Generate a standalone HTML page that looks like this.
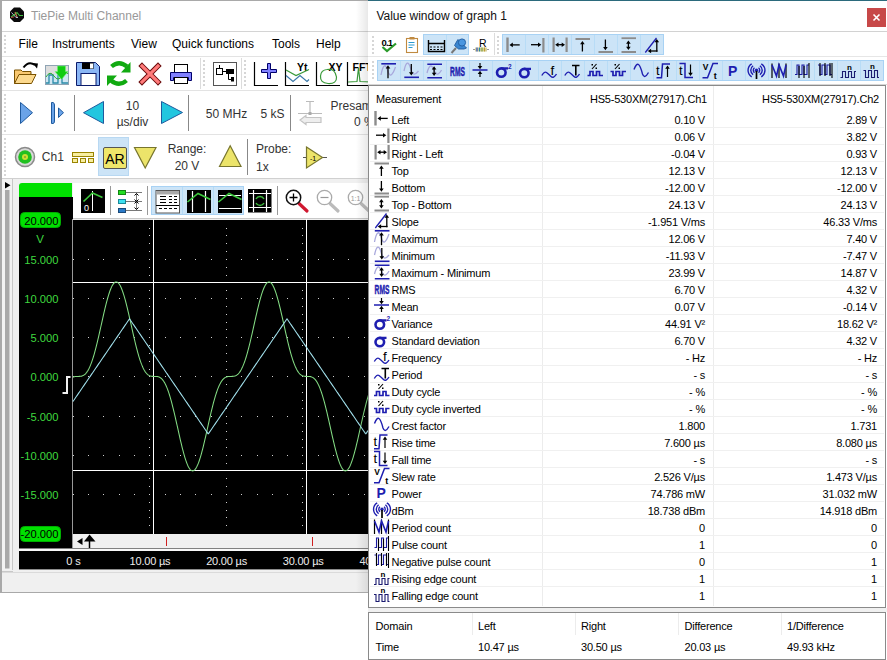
<!DOCTYPE html><html><head><meta charset="utf-8"><style>
*{box-sizing:border-box}
body{margin:0;width:887px;height:660px;position:relative;overflow:hidden;background:#fff;font-family:"Liberation Sans",sans-serif;color:#000}
.a{position:absolute}
.t{position:absolute;white-space:nowrap;line-height:1}
svg{position:absolute;overflow:visible}
</style></head><body>

<div class="a" style="left:0px;top:0px;width:400px;height:593px;background:#f0f0f0;border:1px solid #a9a9a9"></div>
<div class="a" style="left:1px;top:1px;width:399px;height:30px;background:#fff"></div>
<div class="a" style="left:1px;top:31px;width:399px;height:1px;background:#d4d4d4"></div>
<div class="a" style="left:1px;top:32px;width:399px;height:146px;background:#fff"></div>
<div class="a" style="left:1px;top:56px;width:399px;height:1px;background:#e3e3e3"></div>
<div class="a" style="left:1px;top:90px;width:399px;height:1px;background:#e3e3e3"></div>
<div class="a" style="left:1px;top:134px;width:399px;height:1px;background:#e3e3e3"></div>
<div class="a" style="left:1px;top:178px;width:399px;height:1px;background:#d0d0d0"></div>
<div class="a" style="left:4px;top:35px;width:2px;height:2px;background:#d6d6d6"></div><div class="a" style="left:4px;top:39px;width:2px;height:2px;background:#d6d6d6"></div><div class="a" style="left:4px;top:43px;width:2px;height:2px;background:#d6d6d6"></div><div class="a" style="left:4px;top:47px;width:2px;height:2px;background:#d6d6d6"></div><div class="a" style="left:4px;top:51px;width:2px;height:2px;background:#d6d6d6"></div>
<div class="a" style="left:4px;top:60px;width:2px;height:2px;background:#d6d6d6"></div><div class="a" style="left:4px;top:64px;width:2px;height:2px;background:#d6d6d6"></div><div class="a" style="left:4px;top:68px;width:2px;height:2px;background:#d6d6d6"></div><div class="a" style="left:4px;top:72px;width:2px;height:2px;background:#d6d6d6"></div><div class="a" style="left:4px;top:76px;width:2px;height:2px;background:#d6d6d6"></div><div class="a" style="left:4px;top:80px;width:2px;height:2px;background:#d6d6d6"></div><div class="a" style="left:4px;top:84px;width:2px;height:2px;background:#d6d6d6"></div>
<div class="a" style="left:4px;top:94px;width:2px;height:2px;background:#d6d6d6"></div><div class="a" style="left:4px;top:98px;width:2px;height:2px;background:#d6d6d6"></div><div class="a" style="left:4px;top:102px;width:2px;height:2px;background:#d6d6d6"></div><div class="a" style="left:4px;top:106px;width:2px;height:2px;background:#d6d6d6"></div><div class="a" style="left:4px;top:110px;width:2px;height:2px;background:#d6d6d6"></div><div class="a" style="left:4px;top:114px;width:2px;height:2px;background:#d6d6d6"></div><div class="a" style="left:4px;top:118px;width:2px;height:2px;background:#d6d6d6"></div><div class="a" style="left:4px;top:122px;width:2px;height:2px;background:#d6d6d6"></div><div class="a" style="left:4px;top:126px;width:2px;height:2px;background:#d6d6d6"></div><div class="a" style="left:4px;top:130px;width:2px;height:2px;background:#d6d6d6"></div>
<div class="a" style="left:4px;top:138px;width:2px;height:2px;background:#d6d6d6"></div><div class="a" style="left:4px;top:142px;width:2px;height:2px;background:#d6d6d6"></div><div class="a" style="left:4px;top:146px;width:2px;height:2px;background:#d6d6d6"></div><div class="a" style="left:4px;top:150px;width:2px;height:2px;background:#d6d6d6"></div><div class="a" style="left:4px;top:154px;width:2px;height:2px;background:#d6d6d6"></div><div class="a" style="left:4px;top:158px;width:2px;height:2px;background:#d6d6d6"></div><div class="a" style="left:4px;top:162px;width:2px;height:2px;background:#d6d6d6"></div><div class="a" style="left:4px;top:166px;width:2px;height:2px;background:#d6d6d6"></div><div class="a" style="left:4px;top:170px;width:2px;height:2px;background:#d6d6d6"></div><div class="a" style="left:4px;top:174px;width:2px;height:2px;background:#d6d6d6"></div>
<div class="a" style="left:203px;top:60px;width:2px;height:2px;background:#d6d6d6"></div><div class="a" style="left:203px;top:64px;width:2px;height:2px;background:#d6d6d6"></div><div class="a" style="left:203px;top:68px;width:2px;height:2px;background:#d6d6d6"></div><div class="a" style="left:203px;top:72px;width:2px;height:2px;background:#d6d6d6"></div><div class="a" style="left:203px;top:76px;width:2px;height:2px;background:#d6d6d6"></div><div class="a" style="left:203px;top:80px;width:2px;height:2px;background:#d6d6d6"></div><div class="a" style="left:203px;top:84px;width:2px;height:2px;background:#d6d6d6"></div>
<div class="a" style="left:244px;top:60px;width:2px;height:2px;background:#d6d6d6"></div><div class="a" style="left:244px;top:64px;width:2px;height:2px;background:#d6d6d6"></div><div class="a" style="left:244px;top:68px;width:2px;height:2px;background:#d6d6d6"></div><div class="a" style="left:244px;top:72px;width:2px;height:2px;background:#d6d6d6"></div><div class="a" style="left:244px;top:76px;width:2px;height:2px;background:#d6d6d6"></div><div class="a" style="left:244px;top:80px;width:2px;height:2px;background:#d6d6d6"></div><div class="a" style="left:244px;top:84px;width:2px;height:2px;background:#d6d6d6"></div>
<div class="t" style="left:31.00px;top:9.84px;font-size:12px;color:#999;">TiePie Multi Channel</div>
<div class="t" style="left:18.60px;top:38.34px;font-size:12px;color:#000;">File</div>
<div class="t" style="left:52.00px;top:38.34px;font-size:12px;color:#000;">Instruments</div>
<div class="t" style="left:131.00px;top:38.34px;font-size:12px;color:#000;">View</div>
<div class="t" style="left:172.00px;top:38.34px;font-size:12px;color:#000;">Quick functions</div>
<div class="t" style="left:272.00px;top:38.34px;font-size:12px;color:#000;">Tools</div>
<div class="t" style="left:316.00px;top:38.34px;font-size:12px;color:#000;">Help</div>
<svg class="a" style="left:0;top:0" width="400" height="180" viewBox="0 0 400 180"><polygon points="14,7.5 20,7.5 24,11.5 24,18 20,22 14,22 10,18 10,11.5" fill="#0a0a0a"/><path d="M11.5,12.5 L16,17.5 L18,17.5" stroke="#cce" stroke-width="0.9" fill="none"/><path d="M11,17 L14,15 L17,12.5 L19.5,15.5 L23,15.5" stroke="#40c040" stroke-width="1.1" fill="none"/><path d="M11,17.5 L14,17" stroke="#b04040" stroke-width="1" fill="none"/><path d="M15,12 L17,17" stroke="#c08050" stroke-width="1.2" fill="none"/><path d="M14.5,83.5 L14.5,70 L21,70 L22.5,71.5 L31,71.5 L31,74 Z" fill="#f9c870" stroke="#7a5200" stroke-width="1"/><path d="M14.5,83.5 L19,74.5 L36,74.5 L31.5,83.5 Z" fill="#fcd98e" stroke="#7a5200" stroke-width="1"/><path d="M23.5,67.5 Q28.5,60.5 35,65" stroke="#000" stroke-width="2" fill="none"/><polygon points="32.5,63 38,63.5 37,68.5" fill="#000"/><rect x="45.5" y="65.5" width="23" height="19" fill="#cfe6f2" stroke="#8fa4b4"/><rect x="46" y="66" width="22" height="8" fill="#ddd"/><path d="M46,83 L49,83 L49,75 L53,75 L53,83 L58,83 L58,75 L62,75 L62,83 L68,83" stroke="#2a8aa8" stroke-width="1.3" fill="none"/><path d="M46,77 Q50,70 54,76 T62,76 T68,74" stroke="#3a3" stroke-width="1" fill="none"/><polygon points="57.5,66 65.5,66 65.5,71.5 68,71.5 61.5,79.5 55,71.5 57.5,71.5" fill="#1c1" stroke="#7e7" stroke-width="0.6"/><path d="M76.5,62.5 L95.5,62.5 L99.5,66.5 L99.5,85.5 L76.5,85.5 Z" fill="#8ab6f5" stroke="#0b1b6b" stroke-width="1"/><rect x="82" y="62.5" width="11.5" height="6.5" fill="#000"/><rect x="90" y="63.5" width="3" height="5" fill="#fff"/><rect x="81" y="73.5" width="15" height="12" fill="#fff" stroke="#0b1b6b" stroke-width="1"/><path d="M111.5,66.5 Q119,60 127,66.5" stroke="#1a1" stroke-width="4.2" fill="none"/><polygon points="130.5,62 130.5,72.5 121,72.5" fill="#1a1"/><path d="M126.5,80.5 Q119,87 111,80.5" stroke="#1a1" stroke-width="4.2" fill="none"/><polygon points="107,75.5 117,75.5 107,86" fill="#1a1"/><path d="M142,66 L158,82 M158,66 L142,82" stroke="#6a0a0a" stroke-width="5.2" stroke-linecap="square" fill="none"/><path d="M142,66 L158,82 M158,66 L142,82" stroke="#ff7a7a" stroke-width="3.2" stroke-linecap="square" fill="none"/><rect x="174.5" y="64.5" width="13" height="8" fill="#fff" stroke="#000"/><path d="M170.5,72.5 L191.5,72.5 L191.5,80.5 L188.5,80.5 L188.5,77.5 L173.5,77.5 L173.5,80.5 L170.5,80.5 Z" fill="#8080ff" stroke="#00006b"/><rect x="174.5" y="77.5" width="13" height="6" fill="#fff" stroke="#000"/><line x1="200.5" y1="58" x2="200.5" y2="89" stroke="#dcdcdc"/><line x1="241.5" y1="58" x2="241.5" y2="89" stroke="#dcdcdc"/><rect x="213.5" y="62.5" width="23" height="23" fill="#fff" stroke="#555"/><rect x="216.5" y="68.5" width="6" height="6" fill="#fff" stroke="#000"/><line x1="219.5" y1="65" x2="219.5" y2="68.5" stroke="#000"/><line x1="222.5" y1="71.5" x2="226" y2="71.5" stroke="#000"/><rect x="226" y="69" width="8" height="5" fill="#000"/><path d="M228.5,74 L228.5,79.5 L231,79.5" stroke="#000" fill="none"/><rect x="231" y="77" width="3" height="4.5" fill="#000"/><path d="M254.5,62 L254.5,85.5 L278,85.5" stroke="#000" stroke-width="1.2" fill="none"/><path d="M267.5,63.5 L270.5,63.5 L270.5,69.5 L276.5,69.5 L276.5,72.5 L270.5,72.5 L270.5,78.5 L267.5,78.5 L267.5,72.5 L261.5,72.5 L261.5,69.5 L267.5,69.5 Z" fill="#8080ff" stroke="#00006b"/><path d="M285.5,62 L285.5,85.5 L309,85.5" stroke="#000" stroke-width="1.2" fill="none"/><text x="297" y="70.5" font-size="10.5" font-weight="bold" font-family="Liberation Sans">Yt</text><path d="M286,70 L296,75.5 L309,69.5" stroke="#3a9a3a" stroke-width="1.2" fill="none"/><path d="M286,75.5 L293,81.5 L300,75.5 L307,81.5 L309,79.5" stroke="#3a78a8" stroke-width="1.2" fill="none"/><path d="M316.5,62 L316.5,85.5 L340,85.5" stroke="#000" stroke-width="1.2" fill="none"/><text x="328.5" y="70.5" font-size="10.5" font-weight="bold" font-family="Liberation Sans">XY</text><path d="M327,69.5 Q335,68 336.5,77 Q337,84 328,83.5 Q320,83 320.5,76 Q321,70 327,69.5 Z" stroke="#3a9a3a" stroke-width="1.2" fill="none"/><path d="M347.5,62 L347.5,85.5 L371,85.5" stroke="#000" stroke-width="1.2" fill="none"/><text x="352.5" y="70.5" font-size="10.5" font-weight="bold" font-family="Liberation Sans">FFT</text><path d="M348,82 L357,81.5 L358.5,68 L360,81.5 L371,82" stroke="#3a9a3a" stroke-width="1.2" fill="none"/><polygon points="20.5,102.5 32.5,112.7 20.5,123.5" fill="#6aa3e8" stroke="#1f5a9e"/><path d="M51.5,102.5 L53,102.5 Q54.5,103 54.5,105 L54.5,121 Q54.5,123.5 53,123.5 L51.5,123.5 Z" fill="#6aa3e8" stroke="#1f5a9e"/><polygon points="58.5,108 63.5,112.7 58.5,117.5" fill="#6aa3e8" stroke="#1f5a9e"/><line x1="74.5" y1="95" x2="74.5" y2="131" stroke="#888"/><polygon points="83.5,112.7 103.5,101.5 103.5,123.5" fill="#22c6df" stroke="#1f5a9e"/><polygon points="161.5,101.5 182.5,112.5 161.5,123.5" fill="#22c6df" stroke="#1f5a9e"/><line x1="188.5" y1="95" x2="188.5" y2="131" stroke="#888"/><line x1="290.5" y1="95" x2="290.5" y2="131" stroke="#888"/><path d="M306,101.5 L314,101.5 M310,101.5 L310,113 M298,113.5 L322,113.5" stroke="#bbb" stroke-width="1.2" fill="none"/><rect x="308.5" y="112" width="3" height="3" fill="#aaa"/><path d="M321,117.5 L306,117.5 L306,115.5 L300,120 L306,124.5 L306,122.5 L321,122.5 Z" fill="#eee" stroke="#c4c4c4" stroke-width="1.2"/><circle cx="25" cy="157" r="9.5" fill="#d8d8d8" stroke="#8a8a8a" stroke-width="1.5"/><circle cx="25" cy="157" r="6.8" fill="#20c020"/><circle cx="25" cy="157" r="3" fill="#c8e030"/><circle cx="25" cy="157" r="0.8" fill="#663"/><rect x="72.5" y="152.5" width="21" height="4" fill="#f8eea0" stroke="#9a8400"/><rect x="72.5" y="158.5" width="5" height="4" fill="#f8eea0" stroke="#9a8400"/><rect x="80.5" y="158.5" width="5" height="4" fill="#f8eea0" stroke="#9a8400"/><rect x="88.5" y="158.5" width="5" height="4" fill="#f8eea0" stroke="#9a8400"/><rect x="98.5" y="137.5" width="30" height="38" fill="#cce4f7" stroke="#b8d8f2"/><rect x="103.5" y="147.5" width="23" height="21" rx="1.5" fill="#efe66a" stroke="#555"/><text x="115" y="164" font-size="14" text-anchor="middle" font-family="Liberation Sans">AR</text><polygon points="134.5,147.5 156,147.5 145.2,168" fill="#ece46a" stroke="#77752e" stroke-width="1.2"/><polygon points="219.5,166.5 241,166.5 230.2,145.8" fill="#ece46a" stroke="#77752e" stroke-width="1.2"/><line x1="247.5" y1="139" x2="247.5" y2="175" stroke="#888"/><path d="M303,157.5 L306,157.5 M322.5,157.5 L327,157.5" stroke="#555"/><polygon points="306.5,147 322.5,157.5 306.5,168" fill="#ece46a" stroke="#77752e" stroke-width="1.2"/><text x="313" y="160.5" font-size="7" text-anchor="middle" font-family="Liberation Sans">-1</text></svg>
<div class="t" style="left:32.50px;width:200px;text-align:center;top:99.84px;font-size:12px;color:#333;">10</div>
<div class="t" style="left:32.50px;width:200px;text-align:center;top:115.64px;font-size:12px;color:#333;">&micro;s/div</div>
<div class="t" style="left:205.80px;top:107.84px;font-size:12px;color:#333;">50 MHz</div>
<div class="t" style="left:260.60px;top:107.84px;font-size:12px;color:#333;">5 kS</div>
<div class="t" style="left:330.50px;top:99.84px;font-size:12px;color:#333;">Presamples</div>
<div class="t" style="left:354.00px;top:116.34px;font-size:12px;color:#333;">0 %</div>
<div class="t" style="left:41.80px;top:151.24px;font-size:12px;color:#333;">Ch1</div>
<div class="t" style="left:87.00px;width:200px;text-align:center;top:143.44px;font-size:12px;color:#333;">Range:</div>
<div class="t" style="left:87.00px;width:200px;text-align:center;top:160.34px;font-size:12px;color:#333;">20 V</div>
<div class="t" style="left:256.00px;top:143.44px;font-size:12px;color:#333;">Probe:</div>
<div class="t" style="left:256.00px;top:160.74px;font-size:12px;color:#333;">1x</div>
<svg class="a" style="left:0;top:0" width="403" height="600" viewBox="0 0 403 600"><rect x="1" y="179" width="11" height="392" fill="#f3f3f3"/><rect x="5" y="190" width="4.5" height="378.5" fill="#a9a9a9"/><polygon points="5,182 5,188.5 10.5,185.2" fill="#000"/><line x1="12.5" y1="179" x2="12.5" y2="570" stroke="#c8c8c8"/><rect x="13" y="179" width="6" height="392" fill="#f0f0f0"/><rect x="19" y="197" width="54" height="351" fill="#000"/><path d="M19,197 L19,186 Q19,183 22,183 L72,183 L72,197 Z" fill="#00e000"/><rect x="73" y="183" width="330" height="35" fill="#fff"/><rect x="73" y="218" width="330" height="1" fill="#a0a0a0"/><rect x="73" y="218" width="330" height="1" fill="#c8c8c8"/><rect x="73" y="219" width="330" height="1" fill="#eee"/><rect x="73" y="220" width="330" height="314" fill="#000"/><line x1="72.5" y1="219" x2="72.5" y2="548" stroke="#999"/><rect x="73" y="534" width="330" height="14" fill="#f0f0f0"/><rect x="19" y="548" width="384" height="1.3" fill="#808080"/><rect x="19" y="549" width="384" height="2" fill="#f8f8f8"/><rect x="19" y="551" width="384" height="18" fill="#000"/><rect x="19" y="569" width="384" height="1" fill="#8c8c8c"/><rect x="1" y="570" width="400" height="22" fill="#f0f0f0"/><rect x="1" y="572" width="400" height="1" fill="#dadada"/><rect x="1" y="571" width="12" height="1" fill="#c8c8c8"/><rect x="20.5" y="212.5" width="40" height="15" rx="4" fill="#00e000" stroke="#00b000"/><rect x="20.5" y="526.5" width="40" height="15" rx="4" fill="#00e000" stroke="#00b000"/><path d="M149,228h1v1h-1zM149,235h1v1h-1zM149,243h1v1h-1zM149,251h1v1h-1zM149,259h1v1h-1zM149,267h1v1h-1zM149,275h1v1h-1zM149,282h1v1h-1zM149,290h1v1h-1zM149,298h1v1h-1zM149,306h1v1h-1zM149,314h1v1h-1zM149,322h1v1h-1zM149,329h1v1h-1zM149,337h1v1h-1zM149,345h1v1h-1zM149,353h1v1h-1zM149,361h1v1h-1zM149,369h1v1h-1zM149,376h1v1h-1zM149,384h1v1h-1zM149,392h1v1h-1zM149,400h1v1h-1zM149,408h1v1h-1zM149,416h1v1h-1zM149,423h1v1h-1zM149,431h1v1h-1zM149,439h1v1h-1zM149,447h1v1h-1zM149,455h1v1h-1zM149,463h1v1h-1zM149,470h1v1h-1zM149,478h1v1h-1zM149,486h1v1h-1zM149,494h1v1h-1zM149,502h1v1h-1zM149,510h1v1h-1zM149,517h1v1h-1zM149,525h1v1h-1zM226,228h1v1h-1zM226,235h1v1h-1zM226,243h1v1h-1zM226,251h1v1h-1zM226,259h1v1h-1zM226,267h1v1h-1zM226,275h1v1h-1zM226,282h1v1h-1zM226,290h1v1h-1zM226,298h1v1h-1zM226,306h1v1h-1zM226,314h1v1h-1zM226,322h1v1h-1zM226,329h1v1h-1zM226,337h1v1h-1zM226,345h1v1h-1zM226,353h1v1h-1zM226,361h1v1h-1zM226,369h1v1h-1zM226,376h1v1h-1zM226,384h1v1h-1zM226,392h1v1h-1zM226,400h1v1h-1zM226,408h1v1h-1zM226,416h1v1h-1zM226,423h1v1h-1zM226,431h1v1h-1zM226,439h1v1h-1zM226,447h1v1h-1zM226,455h1v1h-1zM226,463h1v1h-1zM226,470h1v1h-1zM226,478h1v1h-1zM226,486h1v1h-1zM226,494h1v1h-1zM226,502h1v1h-1zM226,510h1v1h-1zM226,517h1v1h-1zM226,525h1v1h-1zM302,228h1v1h-1zM302,235h1v1h-1zM302,243h1v1h-1zM302,251h1v1h-1zM302,259h1v1h-1zM302,267h1v1h-1zM302,275h1v1h-1zM302,282h1v1h-1zM302,290h1v1h-1zM302,298h1v1h-1zM302,306h1v1h-1zM302,314h1v1h-1zM302,322h1v1h-1zM302,329h1v1h-1zM302,337h1v1h-1zM302,345h1v1h-1zM302,353h1v1h-1zM302,361h1v1h-1zM302,369h1v1h-1zM302,376h1v1h-1zM302,384h1v1h-1zM302,392h1v1h-1zM302,400h1v1h-1zM302,408h1v1h-1zM302,416h1v1h-1zM302,423h1v1h-1zM302,431h1v1h-1zM302,439h1v1h-1zM302,447h1v1h-1zM302,455h1v1h-1zM302,463h1v1h-1zM302,470h1v1h-1zM302,478h1v1h-1zM302,486h1v1h-1zM302,494h1v1h-1zM302,502h1v1h-1zM302,510h1v1h-1zM302,517h1v1h-1zM302,525h1v1h-1zM379,228h1v1h-1zM379,235h1v1h-1zM379,243h1v1h-1zM379,251h1v1h-1zM379,259h1v1h-1zM379,267h1v1h-1zM379,275h1v1h-1zM379,282h1v1h-1zM379,290h1v1h-1zM379,298h1v1h-1zM379,306h1v1h-1zM379,314h1v1h-1zM379,322h1v1h-1zM379,329h1v1h-1zM379,337h1v1h-1zM379,345h1v1h-1zM379,353h1v1h-1zM379,361h1v1h-1zM379,369h1v1h-1zM379,376h1v1h-1zM379,384h1v1h-1zM379,392h1v1h-1zM379,400h1v1h-1zM379,408h1v1h-1zM379,416h1v1h-1zM379,423h1v1h-1zM379,431h1v1h-1zM379,439h1v1h-1zM379,447h1v1h-1zM379,455h1v1h-1zM379,463h1v1h-1zM379,470h1v1h-1zM379,478h1v1h-1zM379,486h1v1h-1zM379,494h1v1h-1zM379,502h1v1h-1zM379,510h1v1h-1zM379,517h1v1h-1zM379,525h1v1h-1zM73,259h1v1h-1zM88,259h1v1h-1zM103,259h1v1h-1zM119,259h1v1h-1zM134,259h1v1h-1zM149,259h1v1h-1zM165,259h1v1h-1zM180,259h1v1h-1zM195,259h1v1h-1zM211,259h1v1h-1zM226,259h1v1h-1zM241,259h1v1h-1zM257,259h1v1h-1zM272,259h1v1h-1zM287,259h1v1h-1zM302,259h1v1h-1zM318,259h1v1h-1zM333,259h1v1h-1zM348,259h1v1h-1zM364,259h1v1h-1zM379,259h1v1h-1zM394,259h1v1h-1zM73,298h1v1h-1zM88,298h1v1h-1zM103,298h1v1h-1zM119,298h1v1h-1zM134,298h1v1h-1zM149,298h1v1h-1zM165,298h1v1h-1zM180,298h1v1h-1zM195,298h1v1h-1zM211,298h1v1h-1zM226,298h1v1h-1zM241,298h1v1h-1zM257,298h1v1h-1zM272,298h1v1h-1zM287,298h1v1h-1zM302,298h1v1h-1zM318,298h1v1h-1zM333,298h1v1h-1zM348,298h1v1h-1zM364,298h1v1h-1zM379,298h1v1h-1zM394,298h1v1h-1zM73,337h1v1h-1zM88,337h1v1h-1zM103,337h1v1h-1zM119,337h1v1h-1zM134,337h1v1h-1zM149,337h1v1h-1zM165,337h1v1h-1zM180,337h1v1h-1zM195,337h1v1h-1zM211,337h1v1h-1zM226,337h1v1h-1zM241,337h1v1h-1zM257,337h1v1h-1zM272,337h1v1h-1zM287,337h1v1h-1zM302,337h1v1h-1zM318,337h1v1h-1zM333,337h1v1h-1zM348,337h1v1h-1zM364,337h1v1h-1zM379,337h1v1h-1zM394,337h1v1h-1zM73,376h1v1h-1zM88,376h1v1h-1zM103,376h1v1h-1zM119,376h1v1h-1zM134,376h1v1h-1zM149,376h1v1h-1zM165,376h1v1h-1zM180,376h1v1h-1zM195,376h1v1h-1zM211,376h1v1h-1zM226,376h1v1h-1zM241,376h1v1h-1zM257,376h1v1h-1zM272,376h1v1h-1zM287,376h1v1h-1zM302,376h1v1h-1zM318,376h1v1h-1zM333,376h1v1h-1zM348,376h1v1h-1zM364,376h1v1h-1zM379,376h1v1h-1zM394,376h1v1h-1zM73,416h1v1h-1zM88,416h1v1h-1zM103,416h1v1h-1zM119,416h1v1h-1zM134,416h1v1h-1zM149,416h1v1h-1zM165,416h1v1h-1zM180,416h1v1h-1zM195,416h1v1h-1zM211,416h1v1h-1zM226,416h1v1h-1zM241,416h1v1h-1zM257,416h1v1h-1zM272,416h1v1h-1zM287,416h1v1h-1zM302,416h1v1h-1zM318,416h1v1h-1zM333,416h1v1h-1zM348,416h1v1h-1zM364,416h1v1h-1zM379,416h1v1h-1zM394,416h1v1h-1zM73,455h1v1h-1zM88,455h1v1h-1zM103,455h1v1h-1zM119,455h1v1h-1zM134,455h1v1h-1zM149,455h1v1h-1zM165,455h1v1h-1zM180,455h1v1h-1zM195,455h1v1h-1zM211,455h1v1h-1zM226,455h1v1h-1zM241,455h1v1h-1zM257,455h1v1h-1zM272,455h1v1h-1zM287,455h1v1h-1zM302,455h1v1h-1zM318,455h1v1h-1zM333,455h1v1h-1zM348,455h1v1h-1zM364,455h1v1h-1zM379,455h1v1h-1zM394,455h1v1h-1zM73,494h1v1h-1zM88,494h1v1h-1zM103,494h1v1h-1zM119,494h1v1h-1zM134,494h1v1h-1zM149,494h1v1h-1zM165,494h1v1h-1zM180,494h1v1h-1zM195,494h1v1h-1zM211,494h1v1h-1zM226,494h1v1h-1zM241,494h1v1h-1zM257,494h1v1h-1zM272,494h1v1h-1zM287,494h1v1h-1zM302,494h1v1h-1zM318,494h1v1h-1zM333,494h1v1h-1zM348,494h1v1h-1zM364,494h1v1h-1zM379,494h1v1h-1zM394,494h1v1h-1z" fill="#d0d0d0"/><line x1="153.5" y1="219" x2="153.5" y2="534" stroke="#fff"/><line x1="306.5" y1="219" x2="306.5" y2="534" stroke="#fff"/><line x1="73" y1="282.5" x2="403" y2="282.5" stroke="#fff"/><line x1="73" y1="470.5" x2="403" y2="470.5" stroke="#fff"/><polyline points="73.0,377.20 73.5,376.99 74.0,376.81 74.5,376.68 75.0,376.58 75.5,376.50 76.0,376.45 76.5,376.42 77.0,376.41 77.5,376.40 78.0,376.40 78.5,376.40 79.0,376.39 79.5,376.38 80.0,376.35 80.5,376.30 81.0,376.22 81.5,376.12 82.0,375.99 82.5,375.81 83.0,375.60 83.5,375.33 84.0,375.02 84.5,374.66 85.0,374.24 85.5,373.76 86.0,373.21 86.5,372.61 87.0,371.93 87.5,371.18 88.0,370.37 88.5,369.48 89.0,368.51 89.5,367.47 90.0,366.36 90.5,365.17 91.0,363.91 91.5,362.57 92.0,361.16 92.5,359.67 93.0,358.12 93.5,356.49 94.0,354.80 94.5,353.04 95.0,351.23 95.5,349.35 96.0,347.42 96.5,345.44 97.0,343.41 97.5,341.34 98.0,339.22 98.5,337.08 99.0,334.90 99.5,332.70 100.0,330.49 100.5,328.25 101.0,326.01 101.5,323.77 102.0,321.53 102.5,319.30 103.0,317.08 103.5,314.89 104.0,312.72 104.5,310.58 105.0,308.48 105.5,306.43 106.0,304.42 106.5,302.47 107.0,300.58 107.5,298.75 108.0,297.00 108.5,295.32 109.0,293.72 109.5,292.21 110.0,290.79 110.5,289.46 111.0,288.23 111.5,287.10 112.0,286.08 112.5,285.16 113.0,284.35 113.5,283.66 114.0,283.08 114.5,282.61 115.0,282.27 115.5,282.04 116.0,281.93 116.5,281.94 117.0,282.08 117.5,282.33 118.0,282.70 118.5,283.18 119.0,283.79 119.5,284.50 120.0,285.33 120.5,286.27 121.0,287.32 121.5,288.47 122.0,289.72 122.5,291.07 123.0,292.51 123.5,294.04 124.0,295.65 124.5,297.35 125.0,299.11 125.5,300.95 126.0,302.86 126.5,304.82 127.0,306.83 127.5,308.90 128.0,311.01 128.5,313.15 129.0,315.33 129.5,317.53 130.0,319.75 130.5,321.98 131.0,324.22 131.5,326.46 132.0,328.70 132.5,330.93 133.0,333.15 133.5,335.34 134.0,337.51 134.5,339.65 135.0,341.75 135.5,343.82 136.0,345.84 136.5,347.81 137.0,349.73 137.5,351.59 138.0,353.40 138.5,355.14 139.0,356.82 139.5,358.43 140.0,359.97 140.5,361.44 141.0,362.84 141.5,364.17 142.0,365.41 142.5,366.59 143.0,367.69 143.5,368.71 144.0,369.66 144.5,370.54 145.0,371.34 145.5,372.07 146.0,372.73 146.5,373.33 147.0,373.86 147.5,374.33 148.0,374.74 148.5,375.09 149.0,375.39 149.5,375.64 150.0,375.85 150.5,376.02 151.0,376.14 151.5,376.24 152.0,376.31 152.5,376.36 153.0,376.38 153.5,376.40 154.0,376.40 154.5,376.40 155.0,376.40 155.5,376.41 156.0,376.43 156.5,376.46 157.0,376.51 157.5,376.59 158.0,376.70 158.5,376.85 159.0,377.03 159.5,377.25 160.0,377.52 160.5,377.84 161.0,378.22 161.5,378.65 162.0,379.15 162.5,379.70 163.0,380.32 163.5,381.01 164.0,381.77 164.5,382.61 165.0,383.51 165.5,384.49 166.0,385.54 166.5,386.67 167.0,387.88 167.5,389.16 168.0,390.51 168.5,391.94 169.0,393.43 169.5,395.00 170.0,396.64 170.5,398.35 171.0,400.12 171.5,401.94 172.0,403.83 172.5,405.77 173.0,407.76 173.5,409.80 174.0,411.88 174.5,414.00 175.0,416.15 175.5,418.33 176.0,420.54 176.5,422.76 177.0,424.99 177.5,427.23 178.0,429.48 178.5,431.72 179.0,433.94 179.5,436.16 180.0,438.35 180.5,440.51 181.0,442.64 181.5,444.73 182.0,446.78 182.5,448.77 183.0,450.71 183.5,452.59 184.0,454.40 184.5,456.14 185.0,457.80 185.5,459.38 186.0,460.88 186.5,462.28 187.0,463.59 187.5,464.80 188.0,465.91 188.5,466.92 189.0,467.81 189.5,468.60 190.0,469.27 190.5,469.83 191.0,470.27 191.5,470.59 192.0,470.79 192.5,470.88 193.0,470.84 193.5,470.68 194.0,470.41 194.5,470.02 195.0,469.51 195.5,468.88 196.0,468.14 196.5,467.29 197.0,466.33 197.5,465.26 198.0,464.09 198.5,462.82 199.0,461.45 199.5,459.99 200.0,458.45 200.5,456.82 201.0,455.11 201.5,453.32 202.0,451.47 202.5,449.56 203.0,447.58 203.5,445.56 204.0,443.48 204.5,441.37 205.0,439.22 205.5,437.04 206.0,434.83 206.5,432.61 207.0,430.37 207.5,428.13 208.0,425.89 208.5,423.65 209.0,421.42 209.5,419.21 210.0,417.02 210.5,414.86 211.0,412.73 211.5,410.63 212.0,408.57 212.5,406.56 213.0,404.60 213.5,402.69 214.0,400.84 214.5,399.05 215.0,397.32 215.5,395.65 216.0,394.05 216.5,392.53 217.0,391.07 217.5,389.69 218.0,388.38 218.5,387.14 219.0,385.99 219.5,384.90 220.0,383.89 220.5,382.96 221.0,382.10 221.5,381.31 222.0,380.59 222.5,379.94 223.0,379.36 223.5,378.84 224.0,378.39 224.5,377.99 225.0,377.65 225.5,377.35 226.0,377.11 226.5,376.91 227.0,376.76 227.5,376.63 228.0,376.54 228.5,376.48 229.0,376.44 229.5,376.41 230.0,376.40 230.5,376.40 231.0,376.40 231.5,376.40 232.0,376.39 232.5,376.37 233.0,376.33 233.5,376.27 234.0,376.19 234.5,376.07 235.0,375.92 235.5,375.73 236.0,375.50 236.5,375.22 237.0,374.88 237.5,374.50 238.0,374.05 238.5,373.55 239.0,372.98 239.5,372.34 240.0,371.64 240.5,370.87 241.0,370.02 241.5,369.10 242.0,368.11 242.5,367.04 243.0,365.89 243.5,364.67 244.0,363.38 244.5,362.01 245.0,360.57 245.5,359.06 246.0,357.47 246.5,355.82 247.0,354.10 247.5,352.32 248.0,350.48 248.5,348.58 249.0,346.63 249.5,344.63 250.0,342.58 250.5,340.50 251.0,338.37 251.5,336.21 252.0,334.03 252.5,331.82 253.0,329.59 253.5,327.36 254.0,325.12 254.5,322.88 255.0,320.64 255.5,318.41 256.0,316.20 256.5,314.02 257.0,311.86 257.5,309.74 258.0,307.66 258.5,305.62 259.0,303.63 259.5,301.71 260.0,299.84 260.5,298.04 261.0,296.32 261.5,294.67 262.0,293.11 262.5,291.63 263.0,290.25 263.5,288.96 264.0,287.77 264.5,286.68 265.0,285.70 265.5,284.82 266.0,284.06 266.5,283.41 267.0,282.88 267.5,282.46 268.0,282.16 268.5,281.98 269.0,281.92 269.5,281.98 270.0,282.16 270.5,282.46 271.0,282.88 271.5,283.41 272.0,284.06 272.5,284.82 273.0,285.70 273.5,286.68 274.0,287.77 274.5,288.96 275.0,290.25 275.5,291.63 276.0,293.11 276.5,294.67 277.0,296.32 277.5,298.04 278.0,299.84 278.5,301.71 279.0,303.63 279.5,305.62 280.0,307.66 280.5,309.74 281.0,311.86 281.5,314.02 282.0,316.20 282.5,318.41 283.0,320.64 283.5,322.88 284.0,325.12 284.5,327.36 285.0,329.59 285.5,331.82 286.0,334.03 286.5,336.21 287.0,338.37 287.5,340.50 288.0,342.58 288.5,344.63 289.0,346.63 289.5,348.58 290.0,350.48 290.5,352.32 291.0,354.10 291.5,355.82 292.0,357.47 292.5,359.06 293.0,360.57 293.5,362.01 294.0,363.38 294.5,364.67 295.0,365.89 295.5,367.04 296.0,368.11 296.5,369.10 297.0,370.02 297.5,370.87 298.0,371.64 298.5,372.34 299.0,372.98 299.5,373.55 300.0,374.05 300.5,374.50 301.0,374.88 301.5,375.22 302.0,375.50 302.5,375.73 303.0,375.92 303.5,376.07 304.0,376.19 304.5,376.27 305.0,376.33 305.5,376.37 306.0,376.39 306.5,376.40 307.0,376.40 307.5,376.40 308.0,376.40 308.5,376.41 309.0,376.44 309.5,376.48 310.0,376.54 310.5,376.63 311.0,376.76 311.5,376.91 312.0,377.11 312.5,377.35 313.0,377.65 313.5,377.99 314.0,378.39 314.5,378.84 315.0,379.36 315.5,379.94 316.0,380.59 316.5,381.31 317.0,382.10 317.5,382.96 318.0,383.89 318.5,384.90 319.0,385.99 319.5,387.14 320.0,388.38 320.5,389.69 321.0,391.07 321.5,392.53 322.0,394.05 322.5,395.65 323.0,397.32 323.5,399.05 324.0,400.84 324.5,402.69 325.0,404.60 325.5,406.56 326.0,408.57 326.5,410.63 327.0,412.73 327.5,414.86 328.0,417.02 328.5,419.21 329.0,421.42 329.5,423.65 330.0,425.89 330.5,428.13 331.0,430.37 331.5,432.61 332.0,434.83 332.5,437.04 333.0,439.22 333.5,441.37 334.0,443.48 334.5,445.56 335.0,447.58 335.5,449.56 336.0,451.47 336.5,453.32 337.0,455.11 337.5,456.82 338.0,458.45 338.5,459.99 339.0,461.45 339.5,462.82 340.0,464.09 340.5,465.26 341.0,466.33 341.5,467.29 342.0,468.14 342.5,468.88 343.0,469.51 343.5,470.02 344.0,470.41 344.5,470.68 345.0,470.84 345.5,470.88 346.0,470.79 346.5,470.59 347.0,470.27 347.5,469.83 348.0,469.27 348.5,468.60 349.0,467.81 349.5,466.92 350.0,465.91 350.5,464.80 351.0,463.59 351.5,462.28 352.0,460.88 352.5,459.38 353.0,457.80 353.5,456.14 354.0,454.40 354.5,452.59 355.0,450.71 355.5,448.77 356.0,446.78 356.5,444.73 357.0,442.64 357.5,440.51 358.0,438.35 358.5,436.16 359.0,433.94 359.5,431.72 360.0,429.48 360.5,427.23 361.0,424.99 361.5,422.76 362.0,420.54 362.5,418.33 363.0,416.15 363.5,414.00 364.0,411.88 364.5,409.80 365.0,407.76 365.5,405.77 366.0,403.83 366.5,401.94 367.0,400.12 367.5,398.35 368.0,396.64 368.5,395.00 369.0,393.43 369.5,391.94 370.0,390.51 370.5,389.16 371.0,387.88 371.5,386.67 372.0,385.54 372.5,384.49 373.0,383.51 373.5,382.61 374.0,381.77 374.5,381.01 375.0,380.32 375.5,379.70 376.0,379.15 376.5,378.65 377.0,378.22 377.5,377.84 378.0,377.52 378.5,377.25 379.0,377.03 379.5,376.85 380.0,376.70 380.5,376.59 381.0,376.51 381.5,376.46 382.0,376.43 382.5,376.41 383.0,376.40 383.5,376.40 384.0,376.40 384.5,376.40 385.0,376.38 385.5,376.36 386.0,376.31 386.5,376.24 387.0,376.14 387.5,376.02 388.0,375.85 388.5,375.64 389.0,375.39 389.5,375.09 390.0,374.74 390.5,374.33 391.0,373.86 391.5,373.33 392.0,372.73 392.5,372.07 393.0,371.34 393.5,370.54 394.0,369.66 394.5,368.71 395.0,367.69 395.5,366.59 396.0,365.41 396.5,364.17 397.0,362.84 397.5,361.44 398.0,359.97 398.5,358.43 399.0,356.82 399.5,355.14 400.0,353.40 400.5,351.59 401.0,349.73 401.5,347.81 402.0,345.84 402.5,343.82 403.0,341.75" fill="none" stroke="#84dc84" stroke-width="1.05"/><polyline points="73.0,401.44 73.5,400.71 74.0,399.98 74.5,399.25 75.0,398.52 75.5,397.79 76.0,397.06 76.5,396.32 77.0,395.59 77.5,394.86 78.0,394.13 78.5,393.40 79.0,392.67 79.5,391.94 80.0,391.21 80.5,390.48 81.0,389.74 81.5,389.01 82.0,388.28 82.5,387.55 83.0,386.82 83.5,386.09 84.0,385.36 84.5,384.63 85.0,383.89 85.5,383.16 86.0,382.43 86.5,381.70 87.0,380.97 87.5,380.24 88.0,379.51 88.5,378.78 89.0,378.05 89.5,377.31 90.0,376.58 90.5,375.85 91.0,375.12 91.5,374.39 92.0,373.66 92.5,372.93 93.0,372.20 93.5,371.46 94.0,370.73 94.5,370.00 95.0,369.27 95.5,368.54 96.0,367.81 96.5,367.08 97.0,366.35 97.5,365.62 98.0,364.88 98.5,364.15 99.0,363.42 99.5,362.69 100.0,361.96 100.5,361.23 101.0,360.50 101.5,359.77 102.0,359.03 102.5,358.30 103.0,357.57 103.5,356.84 104.0,356.11 104.5,355.38 105.0,354.65 105.5,353.92 106.0,353.19 106.5,352.45 107.0,351.72 107.5,350.99 108.0,350.26 108.5,349.53 109.0,348.80 109.5,348.07 110.0,347.34 110.5,346.60 111.0,345.87 111.5,345.14 112.0,344.41 112.5,343.68 113.0,342.95 113.5,342.22 114.0,341.49 114.5,340.76 115.0,340.02 115.5,339.29 116.0,338.56 116.5,337.83 117.0,337.10 117.5,336.37 118.0,335.64 118.5,334.91 119.0,334.17 119.5,333.44 120.0,332.71 120.5,331.98 121.0,331.25 121.5,330.52 122.0,329.79 122.5,329.06 123.0,328.33 123.5,327.59 124.0,326.86 124.5,326.13 125.0,325.40 125.5,324.67 126.0,323.94 126.5,323.21 127.0,322.48 127.5,321.74 128.0,321.01 128.5,320.28 129.0,319.55 129.5,318.82 130.0,319.55 130.5,320.28 131.0,321.01 131.5,321.74 132.0,322.48 132.5,323.21 133.0,323.94 133.5,324.67 134.0,325.40 134.5,326.13 135.0,326.86 135.5,327.59 136.0,328.33 136.5,329.06 137.0,329.79 137.5,330.52 138.0,331.25 138.5,331.98 139.0,332.71 139.5,333.44 140.0,334.17 140.5,334.91 141.0,335.64 141.5,336.37 142.0,337.10 142.5,337.83 143.0,338.56 143.5,339.29 144.0,340.02 144.5,340.76 145.0,341.49 145.5,342.22 146.0,342.95 146.5,343.68 147.0,344.41 147.5,345.14 148.0,345.87 148.5,346.60 149.0,347.34 149.5,348.07 150.0,348.80 150.5,349.53 151.0,350.26 151.5,350.99 152.0,351.72 152.5,352.45 153.0,353.19 153.5,353.92 154.0,354.65 154.5,355.38 155.0,356.11 155.5,356.84 156.0,357.57 156.5,358.30 157.0,359.03 157.5,359.77 158.0,360.50 158.5,361.23 159.0,361.96 159.5,362.69 160.0,363.42 160.5,364.15 161.0,364.88 161.5,365.62 162.0,366.35 162.5,367.08 163.0,367.81 163.5,368.54 164.0,369.27 164.5,370.00 165.0,370.73 165.5,371.46 166.0,372.20 166.5,372.93 167.0,373.66 167.5,374.39 168.0,375.12 168.5,375.85 169.0,376.58 169.5,377.31 170.0,378.05 170.5,378.78 171.0,379.51 171.5,380.24 172.0,380.97 172.5,381.70 173.0,382.43 173.5,383.16 174.0,383.89 174.5,384.63 175.0,385.36 175.5,386.09 176.0,386.82 176.5,387.55 177.0,388.28 177.5,389.01 178.0,389.74 178.5,390.48 179.0,391.21 179.5,391.94 180.0,392.67 180.5,393.40 181.0,394.13 181.5,394.86 182.0,395.59 182.5,396.32 183.0,397.06 183.5,397.79 184.0,398.52 184.5,399.25 185.0,399.98 185.5,400.71 186.0,401.44 186.5,402.17 187.0,402.91 187.5,403.64 188.0,404.37 188.5,405.10 189.0,405.83 189.5,406.56 190.0,407.29 190.5,408.02 191.0,408.75 191.5,409.49 192.0,410.22 192.5,410.95 193.0,411.68 193.5,412.41 194.0,413.14 194.5,413.87 195.0,414.60 195.5,415.33 196.0,416.07 196.5,416.80 197.0,417.53 197.5,418.26 198.0,418.99 198.5,419.72 199.0,420.45 199.5,421.18 200.0,421.92 200.5,422.65 201.0,423.38 201.5,424.11 202.0,424.84 202.5,425.57 203.0,426.30 203.5,427.03 204.0,427.76 204.5,428.50 205.0,429.23 205.5,429.96 206.0,430.69 206.5,431.42 207.0,432.15 207.5,432.88 208.0,433.61 208.5,433.61 209.0,432.88 209.5,432.15 210.0,431.42 210.5,430.69 211.0,429.96 211.5,429.23 212.0,428.50 212.5,427.76 213.0,427.03 213.5,426.30 214.0,425.57 214.5,424.84 215.0,424.11 215.5,423.38 216.0,422.65 216.5,421.92 217.0,421.18 217.5,420.45 218.0,419.72 218.5,418.99 219.0,418.26 219.5,417.53 220.0,416.80 220.5,416.07 221.0,415.33 221.5,414.60 222.0,413.87 222.5,413.14 223.0,412.41 223.5,411.68 224.0,410.95 224.5,410.22 225.0,409.49 225.5,408.75 226.0,408.02 226.5,407.29 227.0,406.56 227.5,405.83 228.0,405.10 228.5,404.37 229.0,403.64 229.5,402.91 230.0,402.17 230.5,401.44 231.0,400.71 231.5,399.98 232.0,399.25 232.5,398.52 233.0,397.79 233.5,397.06 234.0,396.32 234.5,395.59 235.0,394.86 235.5,394.13 236.0,393.40 236.5,392.67 237.0,391.94 237.5,391.21 238.0,390.48 238.5,389.74 239.0,389.01 239.5,388.28 240.0,387.55 240.5,386.82 241.0,386.09 241.5,385.36 242.0,384.63 242.5,383.89 243.0,383.16 243.5,382.43 244.0,381.70 244.5,380.97 245.0,380.24 245.5,379.51 246.0,378.78 246.5,378.05 247.0,377.31 247.5,376.58 248.0,375.85 248.5,375.12 249.0,374.39 249.5,373.66 250.0,372.93 250.5,372.20 251.0,371.46 251.5,370.73 252.0,370.00 252.5,369.27 253.0,368.54 253.5,367.81 254.0,367.08 254.5,366.35 255.0,365.62 255.5,364.88 256.0,364.15 256.5,363.42 257.0,362.69 257.5,361.96 258.0,361.23 258.5,360.50 259.0,359.77 259.5,359.03 260.0,358.30 260.5,357.57 261.0,356.84 261.5,356.11 262.0,355.38 262.5,354.65 263.0,353.92 263.5,353.19 264.0,352.45 264.5,351.72 265.0,350.99 265.5,350.26 266.0,349.53 266.5,348.80 267.0,348.07 267.5,347.34 268.0,346.60 268.5,345.87 269.0,345.14 269.5,344.41 270.0,343.68 270.5,342.95 271.0,342.22 271.5,341.49 272.0,340.76 272.5,340.02 273.0,339.29 273.5,338.56 274.0,337.83 274.5,337.10 275.0,336.37 275.5,335.64 276.0,334.91 276.5,334.17 277.0,333.44 277.5,332.71 278.0,331.98 278.5,331.25 279.0,330.52 279.5,329.79 280.0,329.06 280.5,328.33 281.0,327.59 281.5,326.86 282.0,326.13 282.5,325.40 283.0,324.67 283.5,323.94 284.0,323.21 284.5,322.48 285.0,321.74 285.5,321.01 286.0,320.28 286.5,319.55 287.0,318.82 287.5,319.55 288.0,320.28 288.5,321.01 289.0,321.74 289.5,322.48 290.0,323.21 290.5,323.94 291.0,324.67 291.5,325.40 292.0,326.13 292.5,326.86 293.0,327.59 293.5,328.33 294.0,329.06 294.5,329.79 295.0,330.52 295.5,331.25 296.0,331.98 296.5,332.71 297.0,333.44 297.5,334.17 298.0,334.91 298.5,335.64 299.0,336.37 299.5,337.10 300.0,337.83 300.5,338.56 301.0,339.29 301.5,340.02 302.0,340.76 302.5,341.49 303.0,342.22 303.5,342.95 304.0,343.68 304.5,344.41 305.0,345.14 305.5,345.87 306.0,346.60 306.5,347.34 307.0,348.07 307.5,348.80 308.0,349.53 308.5,350.26 309.0,350.99 309.5,351.72 310.0,352.45 310.5,353.19 311.0,353.92 311.5,354.65 312.0,355.38 312.5,356.11 313.0,356.84 313.5,357.57 314.0,358.30 314.5,359.03 315.0,359.77 315.5,360.50 316.0,361.23 316.5,361.96 317.0,362.69 317.5,363.42 318.0,364.15 318.5,364.88 319.0,365.62 319.5,366.35 320.0,367.08 320.5,367.81 321.0,368.54 321.5,369.27 322.0,370.00 322.5,370.73 323.0,371.46 323.5,372.20 324.0,372.93 324.5,373.66 325.0,374.39 325.5,375.12 326.0,375.85 326.5,376.58 327.0,377.31 327.5,378.05 328.0,378.78 328.5,379.51 329.0,380.24 329.5,380.97 330.0,381.70 330.5,382.43 331.0,383.16 331.5,383.89 332.0,384.63 332.5,385.36 333.0,386.09 333.5,386.82 334.0,387.55 334.5,388.28 335.0,389.01 335.5,389.74 336.0,390.48 336.5,391.21 337.0,391.94 337.5,392.67 338.0,393.40 338.5,394.13 339.0,394.86 339.5,395.59 340.0,396.32 340.5,397.06 341.0,397.79 341.5,398.52 342.0,399.25 342.5,399.98 343.0,400.71 343.5,401.44 344.0,402.17 344.5,402.91 345.0,403.64 345.5,404.37 346.0,405.10 346.5,405.83 347.0,406.56 347.5,407.29 348.0,408.02 348.5,408.75 349.0,409.49 349.5,410.22 350.0,410.95 350.5,411.68 351.0,412.41 351.5,413.14 352.0,413.87 352.5,414.60 353.0,415.33 353.5,416.07 354.0,416.80 354.5,417.53 355.0,418.26 355.5,418.99 356.0,419.72 356.5,420.45 357.0,421.18 357.5,421.92 358.0,422.65 358.5,423.38 359.0,424.11 359.5,424.84 360.0,425.57 360.5,426.30 361.0,427.03 361.5,427.76 362.0,428.50 362.5,429.23 363.0,429.96 363.5,430.69 364.0,431.42 364.5,432.15 365.0,432.88 365.5,433.61 366.0,433.61 366.5,432.88 367.0,432.15 367.5,431.42 368.0,430.69 368.5,429.96 369.0,429.23 369.5,428.50 370.0,427.76 370.5,427.03 371.0,426.30 371.5,425.57 372.0,424.84 372.5,424.11 373.0,423.38 373.5,422.65 374.0,421.92 374.5,421.18 375.0,420.45 375.5,419.72 376.0,418.99 376.5,418.26 377.0,417.53 377.5,416.80 378.0,416.07 378.5,415.33 379.0,414.60 379.5,413.87 380.0,413.14 380.5,412.41 381.0,411.68 381.5,410.95 382.0,410.22 382.5,409.49 383.0,408.75 383.5,408.02 384.0,407.29 384.5,406.56 385.0,405.83 385.5,405.10 386.0,404.37 386.5,403.64 387.0,402.91 387.5,402.17 388.0,401.44 388.5,400.71 389.0,399.98 389.5,399.25 390.0,398.52 390.5,397.79 391.0,397.06 391.5,396.32 392.0,395.59 392.5,394.86 393.0,394.13 393.5,393.40 394.0,392.67 394.5,391.94 395.0,391.21 395.5,390.48 396.0,389.74 396.5,389.01 397.0,388.28 397.5,387.55 398.0,386.82 398.5,386.09 399.0,385.36 399.5,384.63 400.0,383.89 400.5,383.16 401.0,382.43 401.5,381.70 402.0,380.97 402.5,380.24 403.0,379.51" fill="none" stroke="#a4e4f0" stroke-width="1.05"/><path d="M70.5,377 L67,377 L67,393 L62.5,393" stroke="#f0f0f0" stroke-width="2" fill="none"/><line x1="166.5" y1="537" x2="166.5" y2="546" stroke="#d02020"/><line x1="312.5" y1="537" x2="312.5" y2="546" stroke="#d02020"/><polygon points="77,541.5 82.5,538 82.5,545" fill="#000"/><polygon points="89.5,534.5 95.5,541.5 84,541.5" fill="#000"/><line x1="89.5" y1="541" x2="89.5" y2="548" stroke="#000" stroke-width="1.5"/></svg>
<div class="t" style="right:828.50px;top:215.52px;font-size:11.2px;color:#000;">20.000</div>
<div class="t" style="right:828.50px;top:254.72px;font-size:11.2px;color:#3fd83f;">15.000</div>
<div class="t" style="right:828.50px;top:293.92px;font-size:11.2px;color:#3fd83f;">10.000</div>
<div class="t" style="right:828.50px;top:333.12px;font-size:11.2px;color:#3fd83f;">5.000</div>
<div class="t" style="right:828.50px;top:372.32px;font-size:11.2px;color:#3fd83f;">0.000</div>
<div class="t" style="right:828.50px;top:411.52px;font-size:11.2px;color:#3fd83f;">-5.000</div>
<div class="t" style="right:828.50px;top:450.72px;font-size:11.2px;color:#3fd83f;">-10.000</div>
<div class="t" style="right:828.50px;top:489.92px;font-size:11.2px;color:#3fd83f;">-15.000</div>
<div class="t" style="right:828.50px;top:529.12px;font-size:11.2px;color:#000;">-20.000</div>
<div class="t" style="left:-60.00px;width:200px;text-align:center;top:234.27px;font-size:11.5px;color:#3fd83f;">V</div>
<div class="t" style="left:-26.60px;width:200px;text-align:center;top:555.69px;font-size:11px;color:#eee;letter-spacing:-0.2px;">0 s</div>
<div class="t" style="left:50.00px;width:200px;text-align:center;top:555.69px;font-size:11px;color:#eee;letter-spacing:-0.2px;">10.00 &micro;s</div>
<div class="t" style="left:126.60px;width:200px;text-align:center;top:555.69px;font-size:11px;color:#eee;letter-spacing:-0.2px;">20.00 &micro;s</div>
<div class="t" style="left:203.20px;width:200px;text-align:center;top:555.69px;font-size:11px;color:#eee;letter-spacing:-0.2px;">30.00 &micro;s</div>
<div class="t" style="left:279.80px;width:200px;text-align:center;top:555.69px;font-size:11px;color:#eee;letter-spacing:-0.2px;">40.00 &micro;s</div>
<svg class="a" style="left:0;top:0" width="400" height="230" viewBox="0 0 400 230"><rect x="81" y="189" width="24" height="24" fill="#000"/><line x1="92.5" y1="191" x2="92.5" y2="211" stroke="#fff"/><path d="M83.5,201.5 L92.5,193 L102.5,197.5" stroke="#3cc83c" stroke-width="1.6" fill="none"/><text x="84" y="210.5" font-size="9" fill="#fff" font-family="Liberation Sans">0</text><line x1="110.5" y1="186" x2="110.5" y2="215" stroke="#999"/><line x1="147.5" y1="186" x2="147.5" y2="215" stroke="#999"/><line x1="277.5" y1="186" x2="277.5" y2="215" stroke="#999"/><rect x="118.5" y="190.5" width="7" height="4" fill="#2d2" stroke="#181"/><rect x="118.5" y="199.5" width="7" height="4" fill="#3de0f0" stroke="#1a8a9a"/><rect x="118.5" y="208.5" width="7" height="4" fill="#2a7ac8" stroke="#1a4a7a"/><path d="M125.5,192.5 H142 M125.5,201.5 H142 M125.5,210.5 H142 M136.5,193.5 V209.5" stroke="#555" stroke-width="0.8" fill="none"/><path d="M134.5,195.5 L136.5,193.5 L138.5,195.5 M134.5,199.5 L136.5,201.5 L138.5,199.5 M134.5,203.5 L136.5,201.5 L138.5,203.5 M134.5,207.5 L136.5,209.5 L138.5,207.5" stroke="#000" stroke-width="1" fill="none"/><rect x="151.5" y="186.5" width="92" height="28" fill="#cce4f7" stroke="#a8d2f4"/><line x1="182.5" y1="187" x2="182.5" y2="214" stroke="#b4daf6"/><line x1="213.5" y1="187" x2="213.5" y2="214" stroke="#b4daf6"/><rect x="156" y="190.5" width="23.5" height="22.5" fill="#fff" stroke="#555"/><rect x="156.5" y="191" width="22.5" height="3.5" fill="#aaa"/><path d="M160,196.5 h6 M169,196.5 h3 M174,196.5 h3 M160,199.5 h6 M169,199.5 h3 M174,199.5 h3 M160,202.5 h6 M169,202.5 h3 M174,202.5 h3 M159,208.5 h3 M164,208.5 h3 M169,208.5 h3 M174,208.5 h3 M156,205.5 h23" stroke="#000" stroke-width="1" fill="none"/><rect x="187" y="190" width="24" height="23" fill="#000"/><path d="M192.5,191 V212 M205.5,191 V212" stroke="#fff" stroke-width="1.2"/><path d="M187.5,202 L198,193.5 L210.5,199.5" stroke="#3cc83c" stroke-width="1.6" fill="none"/><rect x="218" y="190" width="24" height="23" fill="#000"/><path d="M219,195.5 H241 M219,208.5 H241" stroke="#fff" stroke-width="1.2"/><path d="M218.5,202 L229,193.5 L241.5,199.5" stroke="#3cc83c" stroke-width="1.6" fill="none"/><rect x="248" y="189" width="23.5" height="23.5" fill="#000"/><path d="M253.5,190 V212 M266.5,190 V212 M249,193.5 H271 M249,207.5 H271" stroke="#fff" stroke-width="1.2"/><path d="M256,199 A4.5,4.5 0 0 1 264,199 M264,203 A4.5,4.5 0 0 1 256,203" stroke="#3cb83c" stroke-width="1.5" fill="none"/><line x1="299" y1="203.5" x2="307" y2="211" stroke="#d01830" stroke-width="3.2" stroke-linecap="round"/><circle cx="293.5" cy="197.5" r="7.2" fill="#fff" stroke="#111" stroke-width="1.5"/><path d="M289.5,197.5 H297.5 M293.5,193.5 V201.5" stroke="#000" stroke-width="1.3"/><line x1="330" y1="203.5" x2="338" y2="211" stroke="#bbb" stroke-width="3.2" stroke-linecap="round"/><circle cx="324.5" cy="197.5" r="7.2" fill="#fff" stroke="#aaa" stroke-width="1.3"/><path d="M320.5,197.5 H328.5" stroke="#999" stroke-width="1.2"/><line x1="361" y1="203.5" x2="369" y2="211" stroke="#bbb" stroke-width="3.2" stroke-linecap="round"/><circle cx="355.5" cy="197.5" r="7.2" fill="#fff" stroke="#aaa" stroke-width="1.3"/><text x="355.5" y="200.5" font-size="7" fill="#999" text-anchor="middle" font-family="Liberation Sans">1:1</text></svg>
<div class="a" style="left:0px;top:0px;width:2px;height:593px;background:#a9a9a9"></div>
<div class="a" style="left:356px;top:1px;width:12px;height:591px;background:linear-gradient(to right,rgba(0,0,0,0),rgba(0,0,0,0.09))"></div>
<div class="a" style="left:368px;top:0px;width:519px;height:660px;background:#fff"></div>
<div class="a" style="left:368px;top:0px;width:519px;height:1px;background:#2b6a7c"></div>
<div class="t" style="left:376.40px;top:9.84px;font-size:12px;color:#111;">Value window of graph 1</div>
<div class="a" style="left:867px;top:8px;width:19px;height:19px;background:#c74848"></div>
<svg class="a" style="left:867px;top:8px" width="19" height="19"><path d="M6.5,6.5 L12.5,12.5 M12.5,6.5 L6.5,12.5" stroke="#fff" stroke-width="1.6"/></svg>
<div class="a" style="left:368px;top:31px;width:519px;height:1px;background:#d2d2d2"></div>
<div class="a" style="left:368px;top:56px;width:519px;height:1px;background:#e6e6e6"></div>
<div class="a" style="left:368px;top:84px;width:519px;height:1px;background:#d6d6d6"></div>
<div class="a" style="left:372px;top:36px;width:2px;height:2px;background:#d6d6d6"></div><div class="a" style="left:372px;top:40px;width:2px;height:2px;background:#d6d6d6"></div><div class="a" style="left:372px;top:44px;width:2px;height:2px;background:#d6d6d6"></div><div class="a" style="left:372px;top:48px;width:2px;height:2px;background:#d6d6d6"></div><div class="a" style="left:372px;top:52px;width:2px;height:2px;background:#d6d6d6"></div>
<div class="a" style="left:372px;top:61px;width:2px;height:2px;background:#d6d6d6"></div><div class="a" style="left:372px;top:65px;width:2px;height:2px;background:#d6d6d6"></div><div class="a" style="left:372px;top:69px;width:2px;height:2px;background:#d6d6d6"></div><div class="a" style="left:372px;top:73px;width:2px;height:2px;background:#d6d6d6"></div><div class="a" style="left:372px;top:77px;width:2px;height:2px;background:#d6d6d6"></div>
<div class="a" style="left:497px;top:36px;width:2px;height:2px;background:#d6d6d6"></div><div class="a" style="left:497px;top:40px;width:2px;height:2px;background:#d6d6d6"></div><div class="a" style="left:497px;top:44px;width:2px;height:2px;background:#d6d6d6"></div><div class="a" style="left:497px;top:48px;width:2px;height:2px;background:#d6d6d6"></div><div class="a" style="left:497px;top:52px;width:2px;height:2px;background:#d6d6d6"></div>
<div class="a" style="left:494px;top:33px;width:1px;height:22px;background:#dcdcdc"></div>
<div class="a" style="left:368px;top:85px;width:518px;height:523px;border:1px solid #8a8a8a;background:#fff"></div>
<div class="a" style="left:368px;top:608px;width:519px;height:4px;background:#f0f0f0"></div>
<div class="a" style="left:368px;top:612px;width:518px;height:48px;border:1px solid #8a8a8a;background:#fff"></div>
<svg class="a" style="left:0;top:0" width="887" height="660"><line x1="542.5" y1="86" x2="542.5" y2="606" stroke="#ececec"/><line x1="713.5" y1="86" x2="713.5" y2="606" stroke="#ececec"/><line x1="370" y1="127.5" x2="884" y2="127.5" stroke="#f0f0f0"/><line x1="370" y1="144.5" x2="884" y2="144.5" stroke="#f0f0f0"/><line x1="370" y1="161.5" x2="884" y2="161.5" stroke="#f0f0f0"/><line x1="370" y1="178.5" x2="884" y2="178.5" stroke="#f0f0f0"/><line x1="370" y1="195.5" x2="884" y2="195.5" stroke="#f0f0f0"/><line x1="370" y1="212.5" x2="884" y2="212.5" stroke="#f0f0f0"/><line x1="370" y1="229.5" x2="884" y2="229.5" stroke="#f0f0f0"/><line x1="370" y1="246.5" x2="884" y2="246.5" stroke="#f0f0f0"/><line x1="370" y1="263.5" x2="884" y2="263.5" stroke="#f0f0f0"/><line x1="370" y1="280.5" x2="884" y2="280.5" stroke="#f0f0f0"/><line x1="370" y1="297.5" x2="884" y2="297.5" stroke="#f0f0f0"/><line x1="370" y1="314.5" x2="884" y2="314.5" stroke="#f0f0f0"/><line x1="370" y1="331.5" x2="884" y2="331.5" stroke="#f0f0f0"/><line x1="370" y1="348.5" x2="884" y2="348.5" stroke="#f0f0f0"/><line x1="370" y1="365.5" x2="884" y2="365.5" stroke="#f0f0f0"/><line x1="370" y1="382.5" x2="884" y2="382.5" stroke="#f0f0f0"/><line x1="370" y1="399.5" x2="884" y2="399.5" stroke="#f0f0f0"/><line x1="370" y1="416.5" x2="884" y2="416.5" stroke="#f0f0f0"/><line x1="370" y1="433.5" x2="884" y2="433.5" stroke="#f0f0f0"/><line x1="370" y1="450.5" x2="884" y2="450.5" stroke="#f0f0f0"/><line x1="370" y1="467.5" x2="884" y2="467.5" stroke="#f0f0f0"/><line x1="370" y1="484.5" x2="884" y2="484.5" stroke="#f0f0f0"/><line x1="370" y1="501.5" x2="884" y2="501.5" stroke="#f0f0f0"/><line x1="370" y1="518.5" x2="884" y2="518.5" stroke="#f0f0f0"/><line x1="370" y1="535.5" x2="884" y2="535.5" stroke="#f0f0f0"/><line x1="370" y1="552.5" x2="884" y2="552.5" stroke="#f0f0f0"/><line x1="370" y1="569.5" x2="884" y2="569.5" stroke="#f0f0f0"/><line x1="370" y1="586.5" x2="884" y2="586.5" stroke="#f0f0f0"/></svg>
<div class="t" style="left:376.00px;top:93.69px;font-size:11px;color:#000;letter-spacing:-0.2px;">Measurement</div>
<div class="t" style="right:180.00px;top:93.69px;font-size:11px;color:#000;letter-spacing:-0.2px;">HS5-530XM(27917).Ch1</div>
<div class="t" style="right:8.00px;top:93.69px;font-size:11px;color:#000;letter-spacing:-0.2px;">HS5-530XM(27917).Ch2</div>
<div class="t" style="left:391.50px;top:114.69px;font-size:11px;color:#000;letter-spacing:-0.2px;">Left</div>
<div class="t" style="right:182.00px;top:114.69px;font-size:11px;color:#000;letter-spacing:-0.2px;">0.10 V</div>
<div class="t" style="right:10.00px;top:114.69px;font-size:11px;color:#000;letter-spacing:-0.2px;">2.89 V</div>
<div class="t" style="left:391.50px;top:131.69px;font-size:11px;color:#000;letter-spacing:-0.2px;">Right</div>
<div class="t" style="right:182.00px;top:131.69px;font-size:11px;color:#000;letter-spacing:-0.2px;">0.06 V</div>
<div class="t" style="right:10.00px;top:131.69px;font-size:11px;color:#000;letter-spacing:-0.2px;">3.82 V</div>
<div class="t" style="left:391.50px;top:148.69px;font-size:11px;color:#000;letter-spacing:-0.2px;">Right - Left</div>
<div class="t" style="right:182.00px;top:148.69px;font-size:11px;color:#000;letter-spacing:-0.2px;">-0.04 V</div>
<div class="t" style="right:10.00px;top:148.69px;font-size:11px;color:#000;letter-spacing:-0.2px;">0.93 V</div>
<div class="t" style="left:391.50px;top:165.69px;font-size:11px;color:#000;letter-spacing:-0.2px;">Top</div>
<div class="t" style="right:182.00px;top:165.69px;font-size:11px;color:#000;letter-spacing:-0.2px;">12.13 V</div>
<div class="t" style="right:10.00px;top:165.69px;font-size:11px;color:#000;letter-spacing:-0.2px;">12.13 V</div>
<div class="t" style="left:391.50px;top:182.69px;font-size:11px;color:#000;letter-spacing:-0.2px;">Bottom</div>
<div class="t" style="right:182.00px;top:182.69px;font-size:11px;color:#000;letter-spacing:-0.2px;">-12.00 V</div>
<div class="t" style="right:10.00px;top:182.69px;font-size:11px;color:#000;letter-spacing:-0.2px;">-12.00 V</div>
<div class="t" style="left:391.50px;top:199.69px;font-size:11px;color:#000;letter-spacing:-0.2px;">Top - Bottom</div>
<div class="t" style="right:182.00px;top:199.69px;font-size:11px;color:#000;letter-spacing:-0.2px;">24.13 V</div>
<div class="t" style="right:10.00px;top:199.69px;font-size:11px;color:#000;letter-spacing:-0.2px;">24.13 V</div>
<div class="t" style="left:391.50px;top:216.69px;font-size:11px;color:#000;letter-spacing:-0.2px;">Slope</div>
<div class="t" style="right:182.00px;top:216.69px;font-size:11px;color:#000;letter-spacing:-0.2px;">-1.951 V/ms</div>
<div class="t" style="right:10.00px;top:216.69px;font-size:11px;color:#000;letter-spacing:-0.2px;">46.33 V/ms</div>
<div class="t" style="left:391.50px;top:233.69px;font-size:11px;color:#000;letter-spacing:-0.2px;">Maximum</div>
<div class="t" style="right:182.00px;top:233.69px;font-size:11px;color:#000;letter-spacing:-0.2px;">12.06 V</div>
<div class="t" style="right:10.00px;top:233.69px;font-size:11px;color:#000;letter-spacing:-0.2px;">7.40 V</div>
<div class="t" style="left:391.50px;top:250.69px;font-size:11px;color:#000;letter-spacing:-0.2px;">Minimum</div>
<div class="t" style="right:182.00px;top:250.69px;font-size:11px;color:#000;letter-spacing:-0.2px;">-11.93 V</div>
<div class="t" style="right:10.00px;top:250.69px;font-size:11px;color:#000;letter-spacing:-0.2px;">-7.47 V</div>
<div class="t" style="left:391.50px;top:267.69px;font-size:11px;color:#000;letter-spacing:-0.2px;">Maximum - Minimum</div>
<div class="t" style="right:182.00px;top:267.69px;font-size:11px;color:#000;letter-spacing:-0.2px;">23.99 V</div>
<div class="t" style="right:10.00px;top:267.69px;font-size:11px;color:#000;letter-spacing:-0.2px;">14.87 V</div>
<div class="t" style="left:391.50px;top:284.69px;font-size:11px;color:#000;letter-spacing:-0.2px;">RMS</div>
<div class="t" style="right:182.00px;top:284.69px;font-size:11px;color:#000;letter-spacing:-0.2px;">6.70 V</div>
<div class="t" style="right:10.00px;top:284.69px;font-size:11px;color:#000;letter-spacing:-0.2px;">4.32 V</div>
<div class="t" style="left:391.50px;top:301.69px;font-size:11px;color:#000;letter-spacing:-0.2px;">Mean</div>
<div class="t" style="right:182.00px;top:301.69px;font-size:11px;color:#000;letter-spacing:-0.2px;">0.07 V</div>
<div class="t" style="right:10.00px;top:301.69px;font-size:11px;color:#000;letter-spacing:-0.2px;">-0.14 V</div>
<div class="t" style="left:391.50px;top:318.69px;font-size:11px;color:#000;letter-spacing:-0.2px;">Variance</div>
<div class="t" style="right:182.00px;top:318.69px;font-size:11px;color:#000;letter-spacing:-0.2px;">44.91 V&sup2;</div>
<div class="t" style="right:10.00px;top:318.69px;font-size:11px;color:#000;letter-spacing:-0.2px;">18.62 V&sup2;</div>
<div class="t" style="left:391.50px;top:335.69px;font-size:11px;color:#000;letter-spacing:-0.2px;">Standard deviation</div>
<div class="t" style="right:182.00px;top:335.69px;font-size:11px;color:#000;letter-spacing:-0.2px;">6.70 V</div>
<div class="t" style="right:10.00px;top:335.69px;font-size:11px;color:#000;letter-spacing:-0.2px;">4.32 V</div>
<div class="t" style="left:391.50px;top:352.69px;font-size:11px;color:#000;letter-spacing:-0.2px;">Frequency</div>
<div class="t" style="right:182.00px;top:352.69px;font-size:11px;color:#000;letter-spacing:-0.2px;">- Hz</div>
<div class="t" style="right:10.00px;top:352.69px;font-size:11px;color:#000;letter-spacing:-0.2px;">- Hz</div>
<div class="t" style="left:391.50px;top:369.69px;font-size:11px;color:#000;letter-spacing:-0.2px;">Period</div>
<div class="t" style="right:182.00px;top:369.69px;font-size:11px;color:#000;letter-spacing:-0.2px;">- s</div>
<div class="t" style="right:10.00px;top:369.69px;font-size:11px;color:#000;letter-spacing:-0.2px;">- s</div>
<div class="t" style="left:391.50px;top:386.69px;font-size:11px;color:#000;letter-spacing:-0.2px;">Duty cycle</div>
<div class="t" style="right:182.00px;top:386.69px;font-size:11px;color:#000;letter-spacing:-0.2px;">- %</div>
<div class="t" style="right:10.00px;top:386.69px;font-size:11px;color:#000;letter-spacing:-0.2px;">- %</div>
<div class="t" style="left:391.50px;top:403.69px;font-size:11px;color:#000;letter-spacing:-0.2px;">Duty cycle inverted</div>
<div class="t" style="right:182.00px;top:403.69px;font-size:11px;color:#000;letter-spacing:-0.2px;">- %</div>
<div class="t" style="right:10.00px;top:403.69px;font-size:11px;color:#000;letter-spacing:-0.2px;">- %</div>
<div class="t" style="left:391.50px;top:420.69px;font-size:11px;color:#000;letter-spacing:-0.2px;">Crest factor</div>
<div class="t" style="right:182.00px;top:420.69px;font-size:11px;color:#000;letter-spacing:-0.2px;">1.800</div>
<div class="t" style="right:10.00px;top:420.69px;font-size:11px;color:#000;letter-spacing:-0.2px;">1.731</div>
<div class="t" style="left:391.50px;top:437.69px;font-size:11px;color:#000;letter-spacing:-0.2px;">Rise time</div>
<div class="t" style="right:182.00px;top:437.69px;font-size:11px;color:#000;letter-spacing:-0.2px;">7.600 &micro;s</div>
<div class="t" style="right:10.00px;top:437.69px;font-size:11px;color:#000;letter-spacing:-0.2px;">8.080 &micro;s</div>
<div class="t" style="left:391.50px;top:454.69px;font-size:11px;color:#000;letter-spacing:-0.2px;">Fall time</div>
<div class="t" style="right:182.00px;top:454.69px;font-size:11px;color:#000;letter-spacing:-0.2px;">- s</div>
<div class="t" style="right:10.00px;top:454.69px;font-size:11px;color:#000;letter-spacing:-0.2px;">- s</div>
<div class="t" style="left:391.50px;top:471.69px;font-size:11px;color:#000;letter-spacing:-0.2px;">Slew rate</div>
<div class="t" style="right:182.00px;top:471.69px;font-size:11px;color:#000;letter-spacing:-0.2px;">2.526 V/&micro;s</div>
<div class="t" style="right:10.00px;top:471.69px;font-size:11px;color:#000;letter-spacing:-0.2px;">1.473 V/&micro;s</div>
<div class="t" style="left:391.50px;top:488.69px;font-size:11px;color:#000;letter-spacing:-0.2px;">Power</div>
<div class="t" style="right:182.00px;top:488.69px;font-size:11px;color:#000;letter-spacing:-0.2px;">74.786 mW</div>
<div class="t" style="right:10.00px;top:488.69px;font-size:11px;color:#000;letter-spacing:-0.2px;">31.032 mW</div>
<div class="t" style="left:391.50px;top:505.69px;font-size:11px;color:#000;letter-spacing:-0.2px;">dBm</div>
<div class="t" style="right:182.00px;top:505.69px;font-size:11px;color:#000;letter-spacing:-0.2px;">18.738 dBm</div>
<div class="t" style="right:10.00px;top:505.69px;font-size:11px;color:#000;letter-spacing:-0.2px;">14.918 dBm</div>
<div class="t" style="left:391.50px;top:522.69px;font-size:11px;color:#000;letter-spacing:-0.2px;">Period count</div>
<div class="t" style="right:182.00px;top:522.69px;font-size:11px;color:#000;letter-spacing:-0.2px;">0</div>
<div class="t" style="right:10.00px;top:522.69px;font-size:11px;color:#000;letter-spacing:-0.2px;">0</div>
<div class="t" style="left:391.50px;top:539.69px;font-size:11px;color:#000;letter-spacing:-0.2px;">Pulse count</div>
<div class="t" style="right:182.00px;top:539.69px;font-size:11px;color:#000;letter-spacing:-0.2px;">1</div>
<div class="t" style="right:10.00px;top:539.69px;font-size:11px;color:#000;letter-spacing:-0.2px;">0</div>
<div class="t" style="left:391.50px;top:556.69px;font-size:11px;color:#000;letter-spacing:-0.2px;">Negative pulse count</div>
<div class="t" style="right:182.00px;top:556.69px;font-size:11px;color:#000;letter-spacing:-0.2px;">0</div>
<div class="t" style="right:10.00px;top:556.69px;font-size:11px;color:#000;letter-spacing:-0.2px;">1</div>
<div class="t" style="left:391.50px;top:573.69px;font-size:11px;color:#000;letter-spacing:-0.2px;">Rising edge count</div>
<div class="t" style="right:182.00px;top:573.69px;font-size:11px;color:#000;letter-spacing:-0.2px;">1</div>
<div class="t" style="right:10.00px;top:573.69px;font-size:11px;color:#000;letter-spacing:-0.2px;">1</div>
<div class="t" style="left:391.50px;top:590.69px;font-size:11px;color:#000;letter-spacing:-0.2px;">Falling edge count</div>
<div class="t" style="right:182.00px;top:590.69px;font-size:11px;color:#000;letter-spacing:-0.2px;">1</div>
<div class="t" style="right:10.00px;top:590.69px;font-size:11px;color:#000;letter-spacing:-0.2px;">1</div>
<div class="a" style="left:472px;top:613px;width:1px;height:22px;background:#ececec"></div>
<div class="a" style="left:575px;top:613px;width:1px;height:22px;background:#ececec"></div>
<div class="a" style="left:678px;top:613px;width:1px;height:22px;background:#ececec"></div>
<div class="a" style="left:781px;top:613px;width:1px;height:22px;background:#ececec"></div>
<div class="t" style="left:375.60px;top:621.29px;font-size:11px;color:#000;letter-spacing:-0.2px;">Domain</div>
<div class="t" style="left:478.00px;top:621.29px;font-size:11px;color:#000;letter-spacing:-0.2px;">Left</div>
<div class="t" style="left:581.00px;top:621.29px;font-size:11px;color:#000;letter-spacing:-0.2px;">Right</div>
<div class="t" style="left:684.50px;top:621.29px;font-size:11px;color:#000;letter-spacing:-0.2px;">Difference</div>
<div class="t" style="left:787.00px;top:621.29px;font-size:11px;color:#000;letter-spacing:-0.2px;">1/Difference</div>
<div class="t" style="left:375.60px;top:641.69px;font-size:11px;color:#000;letter-spacing:-0.2px;">Time</div>
<div class="t" style="left:478.00px;top:641.69px;font-size:11px;color:#000;letter-spacing:-0.2px;">10.47 &micro;s</div>
<div class="t" style="left:581.00px;top:641.69px;font-size:11px;color:#000;letter-spacing:-0.2px;">30.50 &micro;s</div>
<div class="t" style="left:684.50px;top:641.69px;font-size:11px;color:#000;letter-spacing:-0.2px;">20.03 &micro;s</div>
<div class="t" style="left:787.00px;top:641.69px;font-size:11px;color:#000;letter-spacing:-0.2px;">49.93 kHz</div>
<svg class="a" style="left:0;top:0" width="887" height="660"><g transform="translate(374,110)"><rect x="0.3" y="1" width="2.4" height="14.5" fill="#8c8c8c"/><line x1="5.5" y1="8.4" x2="13.7" y2="8.4" stroke="#000" stroke-width="1.3"/><polygon points="3.5,8.4 6.8,6.1000000000000005 6.8,10.7" fill="#000"/></g><g transform="translate(374,127)"><rect x="13.3" y="1.5" width="2.2" height="14.5" fill="#8c8c8c"/><line x1="2" y1="8.2" x2="10.3" y2="8.2" stroke="#000" stroke-width="1.3"/><polygon points="12.3,8.2 9.0,5.8999999999999995 9.0,10.5" fill="#000"/></g><g transform="translate(374,144)"><rect x="0.5" y="1" width="2.2" height="14.5" fill="#8c8c8c"/><rect x="13.5" y="1" width="2.2" height="14.5" fill="#8c8c8c"/><line x1="5.2" y1="8.2" x2="11" y2="8.2" stroke="#000" stroke-width="1.3"/><polygon points="3.2,8.2 6.5,5.8999999999999995 6.5,10.5" fill="#000"/><polygon points="13,8.2 9.7,5.8999999999999995 9.7,10.5" fill="#000"/></g><g transform="translate(374,161)"><rect x="0.5" y="1.5" width="14.5" height="2" fill="#8c8c8c"/><line x1="7.4" y1="6.5" x2="7.4" y2="15" stroke="#000" stroke-width="1.3"/><polygon points="7.4,4.5 5.1000000000000005,7.8 9.7,7.8" fill="#000"/></g><g transform="translate(374,178)"><rect x="0.5" y="14.5" width="14.5" height="2" fill="#8c8c8c"/><line x1="7.4" y1="3" x2="7.4" y2="11.8" stroke="#000" stroke-width="1.3"/><polygon points="7.4,13.8 5.1000000000000005,10.5 9.7,10.5" fill="#000"/></g><g transform="translate(374,195)"><rect x="0.5" y="0.8" width="14.5" height="1.8" fill="#8c8c8c"/><rect x="0.5" y="14.5" width="14.5" height="2" fill="#8c8c8c"/><line x1="7.4" y1="6" x2="7.4" y2="11.5" stroke="#000" stroke-width="1.3"/><polygon points="7.4,4 5.1000000000000005,7.3 9.7,7.3" fill="#000"/><polygon points="7.4,13.5 5.1000000000000005,10.2 9.7,10.2" fill="#000"/></g><g transform="translate(374,212)"><line x1="1.3" y1="16" x2="12.5" y2="1.5" stroke="#1e1eb0" stroke-width="1.3"/><line x1="12.8" y1="4.5" x2="12.8" y2="15.3" stroke="#000" stroke-width="1.3"/><polygon points="12.8,2.5 10.5,5.8 15.100000000000001,5.8" fill="#000"/><line x1="5.8" y1="14.5" x2="13.5" y2="14.5" stroke="#000" stroke-width="1.3"/><polygon points="3.8,14.5 7.1,12.2 7.1,16.8" fill="#000"/></g><g transform="translate(374,229)"><rect x="0.8" y="1" width="14.7" height="1.6" fill="#1e1eb0"/><path d="M0.5,13 C2.5,2 5,1.5 7,8 S11,16 15,5" stroke="#a8a8dc" stroke-width="1.3" fill="none"/><line x1="7.5" y1="5.2" x2="7.5" y2="16.2" stroke="#000" stroke-width="1.3"/><polygon points="7.5,3.2 5.2,6.5 9.8,6.5" fill="#000"/></g><g transform="translate(374,246)"><path d="M0.5,9 C2.5,-1 5,-1 7,6 S11,14 15,9" stroke="#a8a8dc" stroke-width="1.3" fill="none"/><rect x="0.8" y="14.5" width="14.7" height="1.6" fill="#1e1eb0"/><line x1="7.8" y1="2" x2="7.8" y2="11.6" stroke="#000" stroke-width="1.3"/><polygon points="7.8,13.6 5.5,10.3 10.1,10.3" fill="#000"/></g><g transform="translate(374,263)"><path d="M0.5,11 C2.5,3 5,2 7,7 S11,15 15,8" stroke="#a8a8dc" stroke-width="1.3" fill="none"/><rect x="0.8" y="1.5" width="14.7" height="1.5" fill="#1e1eb0"/><rect x="0.8" y="15" width="14.7" height="1.5" fill="#1e1eb0"/><line x1="7.6" y1="6.2" x2="7.6" y2="12" stroke="#000" stroke-width="1.3"/><polygon points="7.6,4.2 5.3,7.5 9.899999999999999,7.5" fill="#000"/><polygon points="7.6,14 5.3,10.7 9.899999999999999,10.7" fill="#000"/></g><g transform="translate(374,280)"><text x="0.6" y="14" font-size="13.5" font-weight="bold" fill="#1e1eb0" stroke="#1e1eb0" stroke-width="0.5" textLength="14.8" lengthAdjust="spacingAndGlyphs" font-family="Liberation Sans">RMS</text></g><g transform="translate(374,297)"><line x1="0" y1="8" x2="15" y2="8" stroke="#1e1eb0" stroke-width="1.5"/><line x1="7.5" y1="1" x2="7.5" y2="5.3" stroke="#000" stroke-width="1.2"/><polygon points="7.5,7.3 5.2,4.0 9.8,4.0" fill="#000"/><line x1="7.5" y1="10.7" x2="7.5" y2="15" stroke="#000" stroke-width="1.2"/><polygon points="7.5,8.7 5.2,12.0 9.8,12.0" fill="#000"/></g><g transform="translate(374,314)"><ellipse cx="5.8" cy="10.6" rx="4.3" ry="4.2" fill="none" stroke="#1e1eb0" stroke-width="2.6"/><path d="M5.5,5.2 L12.5,5.2 L12.5,7.5 L8.5,7.8 Z" fill="#1e1eb0"/><text x="12.6" y="6.5" font-size="6.5" font-weight="bold" fill="#1e1eb0" font-family="Liberation Sans">2</text></g><g transform="translate(374,331)"><ellipse cx="5.8" cy="11.1" rx="4.3" ry="4.2" fill="none" stroke="#1e1eb0" stroke-width="2.6"/><path d="M5.5,5.7 L12.5,5.7 L12.5,8 L8.5,8.3 Z" fill="#1e1eb0"/></g><g transform="translate(374,348)"><path d="M0.3,13.5 Q3,9 5,10.5 T9.5,14.5 T15,12" stroke="#1e1eb0" stroke-width="1.4" fill="none"/><text x="9" y="13" font-size="13.5" fill="#000" font-family="Liberation Sans">f</text></g><g transform="translate(374,365)"><path d="M0.3,13.5 Q3,9 5,10.5 T9.5,14.5 T15,12" stroke="#1e1eb0" stroke-width="1.4" fill="none"/><path d="M7.5,3.5 H15 M11.3,3.5 V13.5" stroke="#000" stroke-width="1.6"/></g><g transform="translate(374,382)"><path d="M0,13.5 H2.5 V9.5 H5.5 V13.5 H9 V9.5 H12 V13.5 H15.5" stroke="#1e1eb0" stroke-width="1.7" fill="none"/><path d="M4.5,7 L9,2" stroke="#000" stroke-width="1.1"/><rect x="4" y="2" width="1.5" height="1.5" fill="#000"/><rect x="8" y="5.5" width="1.5" height="1.5" fill="#000"/></g><g transform="translate(374,399)"><path d="M0,9.5 H2.5 V13.5 H5.5 V9.5 H9 V13.5 H12 V9.5 H15.5" stroke="#1e1eb0" stroke-width="1.7" fill="none"/><path d="M4.5,7 L9,2" stroke="#000" stroke-width="1.1"/><rect x="4" y="2" width="1.5" height="1.5" fill="#000"/><rect x="8" y="5.5" width="1.5" height="1.5" fill="#000"/></g><g transform="translate(374,416)"><path d="M0.5,7.5 Q3,1 5,2.5 Q7,4 9,12 Q11,17.5 15,10.5" stroke="#1e1eb0" stroke-width="1.4" fill="none"/></g><g transform="translate(374,433)"><text x="-0.5" y="13" font-size="13" fill="#000" font-family="Liberation Sans">t</text><path d="M0,15.8 H5 L6,2 H13.5" stroke="#1e1eb0" stroke-width="1.5" fill="none"/><line x1="11" y1="5.5" x2="11" y2="15" stroke="#000" stroke-width="1.2"/><polygon points="11,3.5 8.7,6.8 13.3,6.8" fill="#000"/></g><g transform="translate(374,450)"><text x="-0.5" y="13" font-size="13" fill="#000" font-family="Liberation Sans">t</text><path d="M0,1.5 H5.5 V15.5 H13.5" stroke="#1e1eb0" stroke-width="1.5" fill="none"/><line x1="11" y1="2.5" x2="11" y2="12" stroke="#000" stroke-width="1.2"/><polygon points="11,14 8.7,10.7 13.3,10.7" fill="#000"/></g><g transform="translate(374,467)"><text x="0.3" y="7.5" font-size="8.5" font-weight="bold" fill="#000" font-family="Liberation Sans">V</text><path d="M0,15.8 H5 L10.5,1.5 H15.5" stroke="#1e1eb0" stroke-width="1.5" fill="none"/><text x="11.2" y="16.5" font-size="9" font-weight="bold" fill="#000" font-family="Liberation Sans">t</text></g><g transform="translate(374,484)"><text x="2.5" y="14" font-size="14" font-weight="bold" fill="#1e1eb0" font-family="Liberation Sans">P</text></g><g transform="translate(374,501)"><circle cx="8" cy="8.3" r="1.7" fill="#1e1eb0"/><path d="M6,5.8 A3.2,3.2 0 0 0 6,10.8 M10,5.8 A3.2,3.2 0 0 1 10,10.8 M4.6,3.8 A5.5,5.5 0 0 0 4.6,12.8 M11.4,3.8 A5.5,5.5 0 0 1 11.4,12.8 M3.2,1.8 A7.6,7.6 0 0 0 3.2,14.8 M12.8,1.8 A7.6,7.6 0 0 1 12.8,14.8" stroke="#1e1eb0" stroke-width="1.4" fill="none"/><line x1="8" y1="9" x2="8" y2="17" stroke="#000" stroke-width="1.7"/></g><g transform="translate(374,518)"><path d="M0.5,1.5 V16 M7.5,1.5 V16 M14.5,1.5 V16" stroke="#000" stroke-width="1.2"/><path d="M0.5,3 L5,14 L7.5,3 L12,14 L14.5,3" stroke="#1e1eb0" stroke-width="1.6" fill="none"/></g><g transform="translate(374,535)"><path d="M0.5,12.5 H2.5 V3 H4.5 V12.5 H7.5 V3 H9.5 V12.5 H12.5 V3 H14.5" stroke="#1a1aa0" stroke-width="1.1" fill="none"/><path d="M4.5,4 V16 M9.5,4 V16 M14.5,1 V16" stroke="#000" stroke-width="1.1"/></g><g transform="translate(374,552)"><path d="M0.5,3 H2.5 V12.5 H4.5 V3 H7.5 V12.5 H9.5 V3 H12.5 V12.5 H14.5" stroke="#1a1aa0" stroke-width="1.1" fill="none"/><path d="M2.5,1 V14 M7.5,1 V14 M12.5,1 V14 M14.5,1 V16" stroke="#000" stroke-width="1.1"/></g><g transform="translate(374,569)"><path d="M0,15.5 H2 V9.5 H5 V15.5 H8 V9.5 H11 V15.5 H14 V9.5 H15.5" stroke="#1a1a70" stroke-width="1.1" fill="none"/><text x="6.5" y="7.5" font-size="8" font-weight="bold" fill="#000" font-family="Liberation Sans">n</text></g><g transform="translate(374,586)"><path d="M0,8.5 H2 V15.5 H5 V8.5 H8 V15.5 H11 V8.5 H14 V15.5 H15.5" stroke="#1a1a70" stroke-width="1.1" fill="none"/><text x="6.5" y="7" font-size="8" font-weight="bold" fill="#000" font-family="Liberation Sans">n</text></g><rect x="377.5" y="60.5" width="506" height="20" fill="#cce4f7" stroke="#a8d2f4"/><g transform="translate(380.5,62)"><rect x="0.8" y="1" width="14.7" height="1.6" fill="#1e1eb0"/><path d="M0.5,13 C2.5,2 5,1.5 7,8 S11,16 15,5" stroke="#a8a8dc" stroke-width="1.3" fill="none"/><line x1="7.5" y1="5.2" x2="7.5" y2="16.2" stroke="#000" stroke-width="1.3"/><polygon points="7.5,3.2 5.2,6.5 9.8,6.5" fill="#000"/></g><line x1="400.5" y1="61" x2="400.5" y2="80" stroke="#b8dcf6"/><g transform="translate(403.5,62)"><path d="M0.5,9 C2.5,-1 5,-1 7,6 S11,14 15,9" stroke="#a8a8dc" stroke-width="1.3" fill="none"/><rect x="0.8" y="14.5" width="14.7" height="1.6" fill="#1e1eb0"/><line x1="7.8" y1="2" x2="7.8" y2="11.6" stroke="#000" stroke-width="1.3"/><polygon points="7.8,13.6 5.5,10.3 10.1,10.3" fill="#000"/></g><line x1="423.5" y1="61" x2="423.5" y2="80" stroke="#b8dcf6"/><g transform="translate(426.5,62)"><path d="M0.5,11 C2.5,3 5,2 7,7 S11,15 15,8" stroke="#a8a8dc" stroke-width="1.3" fill="none"/><rect x="0.8" y="1.5" width="14.7" height="1.5" fill="#1e1eb0"/><rect x="0.8" y="15" width="14.7" height="1.5" fill="#1e1eb0"/><line x1="7.6" y1="6.2" x2="7.6" y2="12" stroke="#000" stroke-width="1.3"/><polygon points="7.6,4.2 5.3,7.5 9.899999999999999,7.5" fill="#000"/><polygon points="7.6,14 5.3,10.7 9.899999999999999,10.7" fill="#000"/></g><line x1="446.5" y1="61" x2="446.5" y2="80" stroke="#b8dcf6"/><g transform="translate(449.5,62)"><text x="0.6" y="14" font-size="13.5" font-weight="bold" fill="#1e1eb0" stroke="#1e1eb0" stroke-width="0.5" textLength="14.8" lengthAdjust="spacingAndGlyphs" font-family="Liberation Sans">RMS</text></g><line x1="469.5" y1="61" x2="469.5" y2="80" stroke="#b8dcf6"/><g transform="translate(472.5,62)"><line x1="0" y1="8" x2="15" y2="8" stroke="#1e1eb0" stroke-width="1.5"/><line x1="7.5" y1="1" x2="7.5" y2="5.3" stroke="#000" stroke-width="1.2"/><polygon points="7.5,7.3 5.2,4.0 9.8,4.0" fill="#000"/><line x1="7.5" y1="10.7" x2="7.5" y2="15" stroke="#000" stroke-width="1.2"/><polygon points="7.5,8.7 5.2,12.0 9.8,12.0" fill="#000"/></g><line x1="492.5" y1="61" x2="492.5" y2="80" stroke="#b8dcf6"/><g transform="translate(495.5,62)"><ellipse cx="5.8" cy="10.6" rx="4.3" ry="4.2" fill="none" stroke="#1e1eb0" stroke-width="2.6"/><path d="M5.5,5.2 L12.5,5.2 L12.5,7.5 L8.5,7.8 Z" fill="#1e1eb0"/><text x="12.6" y="6.5" font-size="6.5" font-weight="bold" fill="#1e1eb0" font-family="Liberation Sans">2</text></g><line x1="515.5" y1="61" x2="515.5" y2="80" stroke="#b8dcf6"/><g transform="translate(518.5,62)"><ellipse cx="5.8" cy="11.1" rx="4.3" ry="4.2" fill="none" stroke="#1e1eb0" stroke-width="2.6"/><path d="M5.5,5.7 L12.5,5.7 L12.5,8 L8.5,8.3 Z" fill="#1e1eb0"/></g><line x1="538.5" y1="61" x2="538.5" y2="80" stroke="#b8dcf6"/><g transform="translate(541.5,62)"><path d="M0.3,13.5 Q3,9 5,10.5 T9.5,14.5 T15,12" stroke="#1e1eb0" stroke-width="1.4" fill="none"/><text x="9" y="13" font-size="13.5" fill="#000" font-family="Liberation Sans">f</text></g><line x1="561.5" y1="61" x2="561.5" y2="80" stroke="#b8dcf6"/><g transform="translate(564.5,62)"><path d="M0.3,13.5 Q3,9 5,10.5 T9.5,14.5 T15,12" stroke="#1e1eb0" stroke-width="1.4" fill="none"/><path d="M7.5,3.5 H15 M11.3,3.5 V13.5" stroke="#000" stroke-width="1.6"/></g><line x1="584.5" y1="61" x2="584.5" y2="80" stroke="#b8dcf6"/><g transform="translate(587.5,62)"><path d="M0,13.5 H2.5 V9.5 H5.5 V13.5 H9 V9.5 H12 V13.5 H15.5" stroke="#1e1eb0" stroke-width="1.7" fill="none"/><path d="M4.5,7 L9,2" stroke="#000" stroke-width="1.1"/><rect x="4" y="2" width="1.5" height="1.5" fill="#000"/><rect x="8" y="5.5" width="1.5" height="1.5" fill="#000"/></g><line x1="607.5" y1="61" x2="607.5" y2="80" stroke="#b8dcf6"/><g transform="translate(610.5,62)"><path d="M0,9.5 H2.5 V13.5 H5.5 V9.5 H9 V13.5 H12 V9.5 H15.5" stroke="#1e1eb0" stroke-width="1.7" fill="none"/><path d="M4.5,7 L9,2" stroke="#000" stroke-width="1.1"/><rect x="4" y="2" width="1.5" height="1.5" fill="#000"/><rect x="8" y="5.5" width="1.5" height="1.5" fill="#000"/></g><line x1="630.5" y1="61" x2="630.5" y2="80" stroke="#b8dcf6"/><g transform="translate(633.5,62)"><path d="M0.5,7.5 Q3,1 5,2.5 Q7,4 9,12 Q11,17.5 15,10.5" stroke="#1e1eb0" stroke-width="1.4" fill="none"/></g><line x1="653.5" y1="61" x2="653.5" y2="80" stroke="#b8dcf6"/><g transform="translate(656.5,62)"><text x="-0.5" y="13" font-size="13" fill="#000" font-family="Liberation Sans">t</text><path d="M0,15.8 H5 L6,2 H13.5" stroke="#1e1eb0" stroke-width="1.5" fill="none"/><line x1="11" y1="5.5" x2="11" y2="15" stroke="#000" stroke-width="1.2"/><polygon points="11,3.5 8.7,6.8 13.3,6.8" fill="#000"/></g><line x1="676.5" y1="61" x2="676.5" y2="80" stroke="#b8dcf6"/><g transform="translate(679.5,62)"><text x="-0.5" y="13" font-size="13" fill="#000" font-family="Liberation Sans">t</text><path d="M0,1.5 H5.5 V15.5 H13.5" stroke="#1e1eb0" stroke-width="1.5" fill="none"/><line x1="11" y1="2.5" x2="11" y2="12" stroke="#000" stroke-width="1.2"/><polygon points="11,14 8.7,10.7 13.3,10.7" fill="#000"/></g><line x1="699.5" y1="61" x2="699.5" y2="80" stroke="#b8dcf6"/><g transform="translate(702.5,62)"><text x="0.3" y="7.5" font-size="8.5" font-weight="bold" fill="#000" font-family="Liberation Sans">V</text><path d="M0,15.8 H5 L10.5,1.5 H15.5" stroke="#1e1eb0" stroke-width="1.5" fill="none"/><text x="11.2" y="16.5" font-size="9" font-weight="bold" fill="#000" font-family="Liberation Sans">t</text></g><line x1="722.5" y1="61" x2="722.5" y2="80" stroke="#b8dcf6"/><g transform="translate(725.5,62)"><text x="2.5" y="14" font-size="14" font-weight="bold" fill="#1e1eb0" font-family="Liberation Sans">P</text></g><line x1="745.5" y1="61" x2="745.5" y2="80" stroke="#b8dcf6"/><g transform="translate(748.5,62)"><circle cx="8" cy="8.3" r="1.7" fill="#1e1eb0"/><path d="M6,5.8 A3.2,3.2 0 0 0 6,10.8 M10,5.8 A3.2,3.2 0 0 1 10,10.8 M4.6,3.8 A5.5,5.5 0 0 0 4.6,12.8 M11.4,3.8 A5.5,5.5 0 0 1 11.4,12.8 M3.2,1.8 A7.6,7.6 0 0 0 3.2,14.8 M12.8,1.8 A7.6,7.6 0 0 1 12.8,14.8" stroke="#1e1eb0" stroke-width="1.4" fill="none"/><line x1="8" y1="9" x2="8" y2="17" stroke="#000" stroke-width="1.7"/></g><line x1="768.5" y1="61" x2="768.5" y2="80" stroke="#b8dcf6"/><g transform="translate(771.5,62)"><path d="M0.5,1.5 V16 M7.5,1.5 V16 M14.5,1.5 V16" stroke="#000" stroke-width="1.2"/><path d="M0.5,3 L5,14 L7.5,3 L12,14 L14.5,3" stroke="#1e1eb0" stroke-width="1.6" fill="none"/></g><line x1="791.5" y1="61" x2="791.5" y2="80" stroke="#b8dcf6"/><g transform="translate(794.5,62)"><path d="M0.5,12.5 H2.5 V3 H4.5 V12.5 H7.5 V3 H9.5 V12.5 H12.5 V3 H14.5" stroke="#1a1aa0" stroke-width="1.1" fill="none"/><path d="M4.5,4 V16 M9.5,4 V16 M14.5,1 V16" stroke="#000" stroke-width="1.1"/></g><line x1="814.5" y1="61" x2="814.5" y2="80" stroke="#b8dcf6"/><g transform="translate(817.5,62)"><path d="M0.5,3 H2.5 V12.5 H4.5 V3 H7.5 V12.5 H9.5 V3 H12.5 V12.5 H14.5" stroke="#1a1aa0" stroke-width="1.1" fill="none"/><path d="M2.5,1 V14 M7.5,1 V14 M12.5,1 V14 M14.5,1 V16" stroke="#000" stroke-width="1.1"/></g><line x1="837.5" y1="61" x2="837.5" y2="80" stroke="#b8dcf6"/><g transform="translate(840.5,62)"><path d="M0,15.5 H2 V9.5 H5 V15.5 H8 V9.5 H11 V15.5 H14 V9.5 H15.5" stroke="#1a1a70" stroke-width="1.1" fill="none"/><text x="6.5" y="7.5" font-size="8" font-weight="bold" fill="#000" font-family="Liberation Sans">n</text></g><line x1="860.5" y1="61" x2="860.5" y2="80" stroke="#b8dcf6"/><g transform="translate(863.5,62)"><path d="M0,8.5 H2 V15.5 H5 V8.5 H8 V15.5 H11 V8.5 H14 V15.5 H15.5" stroke="#1a1a70" stroke-width="1.1" fill="none"/><text x="6.5" y="7" font-size="8" font-weight="bold" fill="#000" font-family="Liberation Sans">n</text></g><rect x="502.5" y="34.5" width="161" height="20" fill="#cce4f7" stroke="#a8d2f4"/><rect x="423.5" y="34.5" width="45" height="20" fill="#cce4f7" stroke="#a8d2f4"/><line x1="446.5" y1="35" x2="446.5" y2="54" stroke="#b8dcf6"/><g transform="translate(506,36.5)"><rect x="0.3" y="1" width="2.4" height="14.5" fill="#8c8c8c"/><line x1="5.5" y1="8.4" x2="13.7" y2="8.4" stroke="#000" stroke-width="1.3"/><polygon points="3.5,8.4 6.8,6.1000000000000005 6.8,10.7" fill="#000"/></g><line x1="525.5" y1="35" x2="525.5" y2="54" stroke="#b8dcf6"/><g transform="translate(529,36.5)"><rect x="13.3" y="1.5" width="2.2" height="14.5" fill="#8c8c8c"/><line x1="2" y1="8.2" x2="10.3" y2="8.2" stroke="#000" stroke-width="1.3"/><polygon points="12.3,8.2 9.0,5.8999999999999995 9.0,10.5" fill="#000"/></g><line x1="548.5" y1="35" x2="548.5" y2="54" stroke="#b8dcf6"/><g transform="translate(552,36.5)"><rect x="0.5" y="1" width="2.2" height="14.5" fill="#8c8c8c"/><rect x="13.5" y="1" width="2.2" height="14.5" fill="#8c8c8c"/><line x1="5.2" y1="8.2" x2="11" y2="8.2" stroke="#000" stroke-width="1.3"/><polygon points="3.2,8.2 6.5,5.8999999999999995 6.5,10.5" fill="#000"/><polygon points="13,8.2 9.7,5.8999999999999995 9.7,10.5" fill="#000"/></g><line x1="571.5" y1="35" x2="571.5" y2="54" stroke="#b8dcf6"/><g transform="translate(575,36.5)"><rect x="0.5" y="1.5" width="14.5" height="2" fill="#8c8c8c"/><line x1="7.4" y1="6.5" x2="7.4" y2="15" stroke="#000" stroke-width="1.3"/><polygon points="7.4,4.5 5.1000000000000005,7.8 9.7,7.8" fill="#000"/></g><line x1="594.5" y1="35" x2="594.5" y2="54" stroke="#b8dcf6"/><g transform="translate(598,36.5)"><rect x="0.5" y="14.5" width="14.5" height="2" fill="#8c8c8c"/><line x1="7.4" y1="3" x2="7.4" y2="11.8" stroke="#000" stroke-width="1.3"/><polygon points="7.4,13.8 5.1000000000000005,10.5 9.7,10.5" fill="#000"/></g><line x1="617.5" y1="35" x2="617.5" y2="54" stroke="#b8dcf6"/><g transform="translate(621,36.5)"><rect x="0.5" y="0.8" width="14.5" height="1.8" fill="#8c8c8c"/><rect x="0.5" y="14.5" width="14.5" height="2" fill="#8c8c8c"/><line x1="7.4" y1="6" x2="7.4" y2="11.5" stroke="#000" stroke-width="1.3"/><polygon points="7.4,4 5.1000000000000005,7.3 9.7,7.3" fill="#000"/><polygon points="7.4,13.5 5.1000000000000005,10.2 9.7,10.2" fill="#000"/></g><line x1="640.5" y1="35" x2="640.5" y2="54" stroke="#b8dcf6"/><g transform="translate(644,36.5)"><line x1="1.3" y1="16" x2="12.5" y2="1.5" stroke="#1e1eb0" stroke-width="1.3"/><line x1="12.8" y1="4.5" x2="12.8" y2="15.3" stroke="#000" stroke-width="1.3"/><polygon points="12.8,2.5 10.5,5.8 15.100000000000001,5.8" fill="#000"/><line x1="5.8" y1="14.5" x2="13.5" y2="14.5" stroke="#000" stroke-width="1.3"/><polygon points="3.8,14.5 7.1,12.2 7.1,16.8" fill="#000"/></g><text x="381.5" y="45.5" font-size="9.5" font-weight="bold" font-family="Liberation Sans" letter-spacing="-0.8">0.1</text><path d="M382.5,47 L387,51 L396,43.5" stroke="#2a9a2a" stroke-width="2.2" fill="none"/><rect x="406.5" y="38.5" width="11" height="14" fill="#fff" stroke="#c08a40" stroke-width="1.1"/><rect x="409.5" y="37" width="5" height="2.5" fill="#c08a40"/><path d="M408.5,42.5 h6 M408.5,45 h6 M408.5,47.5 h4" stroke="#2a9ad0" stroke-width="1"/><path d="M428.5,40 V51.5 H444.5 V40 M428.5,43.5 H444.5" stroke="#000" stroke-width="1.4" fill="none"/><path d="M430,47 h2 M433.5,47 h2 M437,47 h2 M440.5,47 h2 M430,49.5 h2 M433.5,49.5 h2 M437,49.5 h2 M440.5,49.5 h2" stroke="#000" stroke-width="1"/><path d="M458,39.5 L466.5,48 L464,49 L458.5,49 L454.5,45.5 L457,41 Z" fill="#3a86d0" stroke="#1f5a9e" stroke-width="0.9"/><circle cx="462" cy="42.5" r="3.6" fill="#4a96e0" stroke="#1f5a9e" stroke-width="0.9"/><line x1="456" y1="48" x2="451.5" y2="53" stroke="#777" stroke-width="2"/><text x="479" y="46.5" font-size="10.5" font-family="Liberation Sans">R</text><line x1="473" y1="49.5" x2="489" y2="49.5" stroke="#999"/><rect x="475" y="47.5" width="12" height="4" fill="#d8d0a0"/><path d="M477,47.5 v4" stroke="#3050c0" stroke-width="1.2"/><path d="M479.5,47.5 v4" stroke="#2a8a9a" stroke-width="1.2"/><path d="M482,47.5 v4" stroke="#80a040" stroke-width="1.2"/><path d="M484.5,47.5 v4" stroke="#c0a030" stroke-width="1.2"/></svg>
</body></html>
